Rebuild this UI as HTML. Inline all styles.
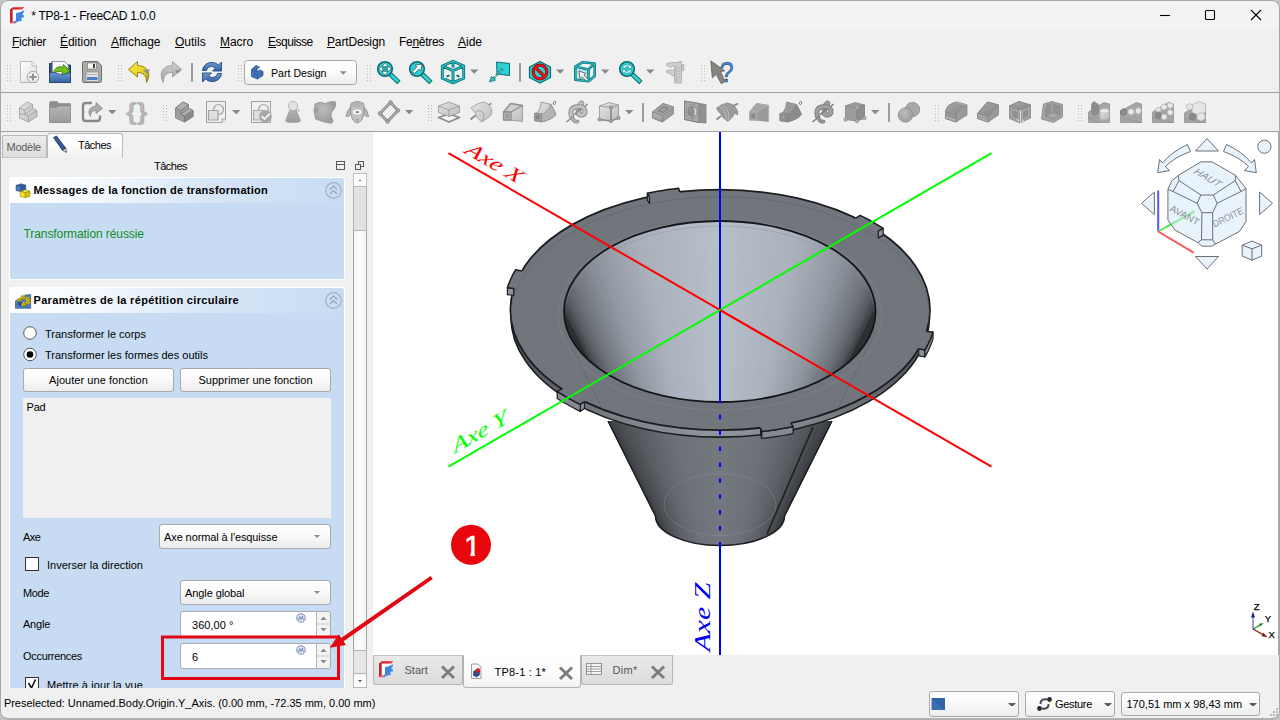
<!DOCTYPE html>
<html lang="fr"><head><meta charset="utf-8"><title>TP8-1 - FreeCAD 1.0.0</title>
<style>
html,body{margin:0;padding:0}
body{width:1280px;height:720px;position:relative;overflow:hidden;background:#f0f0f0;font-family:"Liberation Sans",sans-serif;color:#000}
.abs{position:absolute}
#titlebar{left:0;top:0;width:1280px;height:30px;background:#f1f3f5}
#title{left:31.300px;top:8.500px;font-size:12px;line-height:14px;white-space:nowrap;letter-spacing:-0.31px}
.menu{top:34px;font-size:12px;line-height:16px;white-space:nowrap}
.menu u{text-decoration-thickness:1px;text-underline-offset:1px}
.hline{left:0;width:1280px;height:1px;background:#a0a0a0}
.grip{width:4px;height:16px;background-image:radial-gradient(circle,#b4b4b4 0.6px,transparent 0.8px);background-size:2px 2px}
.ico{width:24px;height:24px}
.tsep{width:2px;height:18px;background:#8c8c8c}
.dd{width:0;height:0;border-left:4px solid transparent;border-right:4px solid transparent;border-top:4px solid #7a7a7a}
.btn{box-sizing:border-box;border:1px solid #a9a9a9;border-radius:3px;background:linear-gradient(#ffffff,#fafafa 45%,#ececec)}
.spin{box-sizing:border-box;border:1px solid #a9a9a9;border-radius:3px;background:#fff}
.cdd{width:0;height:0;border-left:3.5px solid transparent;border-right:3.5px solid transparent;border-top:3.5px solid #8a8a8a}
.t11{font-size:11px;line-height:13px;white-space:nowrap}
</style></head>
<body>
<!-- TITLE BAR -->
<div id="titlebar" class="abs"></div>
<svg class="abs" style="left:8px;top:5px" width="18" height="20" viewBox="8 5 18 20">
<path d="M10 9.500 L12.800 7.200 V21 L10 23.200 Z" fill="#c4202b"/>
<path d="M12.800 7.200 H24.200 L21.500 9.800 H12.800 Z" fill="#d8262f"/>
<path d="M20 7.200 H24.200 L21.500 9.800 H19 Z" fill="#f04a4a"/>
<path d="M10 23.200 L12.800 21 H16 L14 23.200 Z" fill="#ff5252"/>
<path d="M12.800 9.800 H21.500 V12.800 H16.800 V14.300 H19.500 V17.300 H16.800 V21.200 H12.800 Z" fill="#ffffff"/>
<path d="M16 13 L19 12.600 L21.500 11.500 L24.200 10.300 L23.400 13 L22 14.200 L23.800 15.200 V17.600 H21.800 L21.200 19 L22 20.400 L20.400 21.600 L19.200 20.600 L18.400 22 L16.800 21.800 L15.800 23.200 H13.800 L15.200 21.400 L16 19.500 Z" fill="#3b86e2"/>
</svg>
<div id="title" class="abs">* TP8-1 - FreeCAD 1.0.0</div>
<svg class="abs" style="left:1150px;top:0" width="130" height="30" viewBox="0 0 130 30" fill="none" stroke="#000" stroke-width="1.1">
<path d="M10 15.5 H20"/><rect x="55.5" y="10.5" width="9" height="9" rx="1"/><path d="M101 10 L111 20 M111 10 L101 20"/>
</svg>
<!-- MENU BAR -->
<div class="abs menu" style="left:12px;letter-spacing:-0.29px">Fichier</div>
<div class="abs menu" style="left:60px;letter-spacing:-0.03px">Édition</div>
<div class="abs menu" style="left:111px;letter-spacing:-0.04px">Affichage</div>
<div class="abs menu" style="left:175px;letter-spacing:0.01px">Outils</div>
<div class="abs menu" style="left:220px;letter-spacing:-0.06px">Macro</div>
<div class="abs menu" style="left:268px;letter-spacing:-0.49px">Esquisse</div>
<div class="abs menu" style="left:327px;letter-spacing:-0.14px">PartDesign</div>
<div class="abs menu" style="left:399px;letter-spacing:-0.29px">Fenêtres</div>
<div class="abs menu" style="left:458px;letter-spacing:0.00px">Aide</div>
<div class="abs" style="left:12.0px;top:47px;width:7.0px;height:1px;background:#000"></div><div class="abs" style="left:60.0px;top:47px;width:8.0px;height:1px;background:#000"></div><div class="abs" style="left:111.0px;top:47px;width:8.0px;height:1px;background:#000"></div><div class="abs" style="left:175.0px;top:47px;width:9.4px;height:1px;background:#000"></div><div class="abs" style="left:220.0px;top:47px;width:9.9px;height:1px;background:#000"></div><div class="abs" style="left:268.0px;top:47px;width:7.5px;height:1px;background:#000"></div><div class="abs" style="left:327.0px;top:47px;width:7.9px;height:1px;background:#000"></div><div class="abs" style="left:412.4px;top:47px;width:6.4px;height:1px;background:#000"></div><div class="abs" style="left:458.0px;top:47px;width:8.0px;height:1px;background:#000"></div>
<div class="abs hline" style="top:92px"></div>
<div class="abs hline" style="top:131px"></div>
<!--TOOLBAR1-->
<svg class="abs" style="left:0;top:54px" width="1280" height="38" viewBox="0 54 1280 38">
<defs>
<linearGradient id="gPage" x1="0" y1="0" x2="1" y2="1"><stop offset="0" stop-color="#fff"/><stop offset="1" stop-color="#dcdcdc"/></linearGradient>
<linearGradient id="gBlue" x1="0" y1="0" x2="0" y2="1"><stop offset="0" stop-color="#6d9bd0"/><stop offset="1" stop-color="#3465a4"/></linearGradient>
<linearGradient id="gYel" x1="0" y1="0" x2="1" y2="1"><stop offset="0" stop-color="#fce94f"/><stop offset="0.7" stop-color="#e6cc1a"/><stop offset="1" stop-color="#8a7a08"/></linearGradient>
<linearGradient id="gGry" x1="0" y1="0" x2="0" y2="1"><stop offset="0" stop-color="#d0d0d0"/><stop offset="1" stop-color="#a2a2a2"/></linearGradient>
<linearGradient id="gCombo" x1="0" y1="0" x2="0" y2="1"><stop offset="0" stop-color="#ffffff"/><stop offset="0.5" stop-color="#fbfbfb"/><stop offset="1" stop-color="#ececec"/></linearGradient>
<g id="grip" fill="#bbbbbb"><rect x="0" y="0" width="1" height="1"/><rect x="3" y="0" width="1" height="1"/><rect x="0" y="3" width="1" height="1"/><rect x="3" y="3" width="1" height="1"/><rect x="0" y="6" width="1" height="1"/><rect x="3" y="6" width="1" height="1"/><rect x="0" y="9" width="1" height="1"/><rect x="3" y="9" width="1" height="1"/><rect x="0" y="12" width="1" height="1"/><rect x="3" y="12" width="1" height="1"/><rect x="0" y="15" width="1" height="1"/><rect x="3" y="15" width="1" height="1"/></g>
<path id="dd" d="M0 0 H8.400 L4.200 4.300 Z" fill="#878787"/>
</defs>
<use href="#grip" x="7" y="65"/><use href="#grip" x="118" y="65"/><use href="#grip" x="238" y="65"/><use href="#grip" x="367" y="65"/><use href="#grip" x="701" y="65"/>
<!-- new -->
<path d="M20.5 61.5 H32 L36.5 66 V82.5 H20.5 Z" fill="url(#gPage)" stroke="#b8b8b8" stroke-width="1"/>
<path d="M32 61.5 V66 H36.5" fill="#f4f4f4" stroke="#b0b0b0" stroke-width="0.8"/>
<circle cx="33" cy="77" r="5.6" fill="#f2f2f2" stroke="#a8a8a8" stroke-width="1"/>
<path d="M33 73.5 V80.5 M29.5 77 H36.5" stroke="#8e8e8e" stroke-width="2"/>
<!-- open -->
<path d="M49.5 63.5 H52 V61.5 H64.5 L68 65 H70.5 V82.5 H49.5 Z" fill="#2a5590" stroke="#1b3a66" stroke-width="1"/>
<path d="M52.5 61.5 H64.5 L68 65 V76 H52.5 Z" fill="#fafafa" stroke="#9a9a9a" stroke-width="0.8"/>
<path d="M53.5 74 C54 67 60 65.5 63 67.5 L63.5 64.5 L70 71 L62 75.5 L62.5 72 C59.5 70.5 56 71.5 53.5 74 Z" fill="#73c21c" stroke="#3f7d0a" stroke-width="0.9"/>
<path d="M49.5 73 C55 71 58 74.5 62 74.5 C66 74.5 68 73 70.5 72.5 V82.5 H49.5 Z" fill="url(#gBlue)" stroke="#24466f" stroke-width="0.8"/>
<!-- save -->
<path d="M83.5 61.5 H97.5 L101.5 65.5 V80.5 Q101.5 82.5 99.5 82.5 H83.5 Q82.5 82.5 82.5 80.5 V63 Q82.5 61.5 83.5 61.5 Z" fill="#a9aba4" stroke="#6e706b" stroke-width="1"/>
<rect x="87.5" y="63" width="9" height="6" fill="#f6f6f6" stroke="#7a7a7a" stroke-width="0.7"/>
<rect x="93" y="64" width="2" height="4" fill="#3a3a3a"/>
<rect x="86" y="72" width="12.5" height="9.5" fill="#e2e2e2" stroke="#8a8a8a" stroke-width="0.7"/>
<path d="M87 74.5 H97.5" stroke="#b5b5b5" stroke-width="1"/>
<rect x="87" y="77" width="10.5" height="3" fill="#4a7fc4"/>
<!-- undo -->
<path d="M137.5 61.5 L128.5 69.5 L137.5 77 V72.5 C143 72.5 147 75 146.5 82.5 C150.5 76 150 66 137.5 65.5 Z" fill="url(#gYel)" stroke="#8a7808" stroke-width="0.9" stroke-linejoin="round"/>
<path d="M143 70 L150 69.5 L147 74 Z" fill="#8d8d8d"/>
<!-- redo -->
<path d="M172.500 61.5 L181.500 69.5 L172.500 77 V72.5 C167 72.500 163 75 163.500 82.500 C159.500 76 160 66 172.500 65.500 Z" fill="url(#gGry)" stroke="#9c9c9c" stroke-width="0.9" stroke-linejoin="round"/>
<path d="M175 70.5 L181.500 69.5 L177.500 73.500 Z" fill="#8f8f8f"/>
<rect x="191" y="63" width="2" height="19" fill="#9d9d9d"/>
<!-- refresh -->
<path d="M202.500 70.500 C203 63.500 212 59.500 218.500 65 L221.500 62 V71 H212.500 L215.500 68 C211.500 65 207.500 67 206.500 70.500 Z" fill="url(#gBlue)" stroke="#234a80" stroke-width="0.9" stroke-linejoin="round"/>
<path d="M221.500 73.500 C221 80.500 212 84.500 205.500 79 L202.500 82 V73 H211.500 L208.500 76 C212.500 79 216.500 77 217.500 73.500 Z" fill="url(#gBlue)" stroke="#234a80" stroke-width="0.9" stroke-linejoin="round"/>
<!-- combo -->
<rect x="244.500" y="60.500" width="112" height="24" rx="3" fill="url(#gCombo)" stroke="#a6a6a6"/>
<path d="M251.500 69.500 L256 65.500 L259.500 67 L257 69.500 V71.500 L260 70 L263 71.500 V75.500 L257.500 79 L251.500 76.500 Z" fill="#4174b8" stroke="#27508a" stroke-width="0.8" stroke-linejoin="round"/>
<path d="M251.500 69.500 L254.500 71 L254.500 74 L257.500 75.500 V79 M254.500 71 L257 69.500 M257.500 75.500 L263 71.500" stroke="#2a528c" stroke-width="0.7" fill="none"/>
<text x="271" y="76.500" font-family="Liberation Sans, sans-serif" font-size="11" fill="#000" textLength="55.500" lengthAdjust="spacingAndGlyphs">Part Design</text>
<path d="M339.800 71.200 H346.600 L343.200 74.800 Z" fill="#8e8e8e"/>
<!-- zoom fit -->
<g stroke-linejoin="round">
<path d="M390.0 74 L398.9 82.400" stroke="#0c6d72" stroke-width="4.800"/>
<path d="M390.0 74 L398.2 81.700" stroke="#2fd2d6" stroke-width="2.800"/>
<circle cx="385" cy="69" r="7.300" fill="#2ccfd4" stroke="#0c6d72" stroke-width="1.600"/>
<path d="M385 62.800 L388 66.600 H382 Z M385 75.200 L388 71.400 H382 Z M378.800 69 L382.600 66 V72 Z M391.200 69 L387.400 66 V72 Z" fill="#f4f4f4" stroke="#3a5a5c" stroke-width="0.600"/>
<rect x="383" y="67" width="4" height="4" fill="#1aa6ac"/>
</g>
<!-- zoom selection -->
<g stroke-linejoin="round">
<path d="M422.0 74 L430.9 82.400" stroke="#0c6d72" stroke-width="4.800"/>
<path d="M422.0 74 L430.2 81.700" stroke="#2fd2d6" stroke-width="2.800"/>
<circle cx="417" cy="69" r="7.300" fill="#2ccfd4" stroke="#0c6d72" stroke-width="1.600"/>
<path d="M422 64 L420.800 71 L419 69.200 L414.600 73.600 L412.400 71.400 L416.800 67 L415 65.200 Z" fill="#f4f4f4" stroke="#2c4a4c" stroke-width="0.700"/>
</g>
<!-- iso cube -->
<g fill="none" stroke-linejoin="round">
<path d="M453 61.200 L463.700 66 V78.200 L453 82.800 L442.300 78.200 V66 Z M442.300 66 L453 70.700 L463.700 66 M453 70.700 V82.800 M453 61.200 V67.500" stroke="#0b6b70" stroke-width="2.900"/>
<path d="M453 61.200 L463.700 66 V78.200 L453 82.800 L442.300 78.200 V66 Z M442.300 66 L453 70.700 L463.700 66 M453 70.700 V82.800 M453 62 V67" stroke="#25c2c7" stroke-width="1.300"/>
<ellipse cx="448" cy="76" rx="1.800" ry="1" fill="#0b6b70" transform="rotate(-20 448 76)"/><ellipse cx="458" cy="76" rx="1.800" ry="1" fill="#0b6b70" transform="rotate(20 458 76)"/>
</g>
<use href="#dd" x="470" y="69.500"/>
<!-- draw style -->
<path d="M496.500 62 L509.500 63.500 V75.500 L497 74 Z" fill="#2ccfd4" stroke="#0c6d72" stroke-width="1"/>
<path d="M489.500 82 L491.500 76.500 L495.500 80 Z" fill="#2ccfd4" stroke="#0c6d72" stroke-width="0.800"/>
<path d="M493.500 78.500 L503 68" stroke="#0c6d72" stroke-width="2.200" stroke-dasharray="2.500 1.200"/>
<path d="M493.500 78.500 L503 68" stroke="#cfeff0" stroke-width="0.700" stroke-dasharray="2.500 1.200"/>
<rect x="519" y="63" width="2" height="19" fill="#9d9d9d"/>
<!-- no-entry hex -->
<path d="M540 61.500 L550.500 67 V77.500 L540 83 L529.500 77.500 V67 Z" fill="#2ccfd4" stroke="#0c6d72" stroke-width="1.200" stroke-linejoin="round"/>
<path d="M540 63.500 L548.500 68 L540 72 L531.500 68 Z" fill="#43dade" opacity="0.600"/>
<circle cx="540" cy="72" r="6.800" fill="none" stroke="#7a0a0a" stroke-width="3.200"/>
<path d="M535.200 67.200 L544.800 76.800" stroke="#7a0a0a" stroke-width="3.200"/>
<circle cx="540" cy="72" r="6.800" fill="none" stroke="#e01818" stroke-width="2"/>
<path d="M535.200 67.200 L544.800 76.800" stroke="#e01818" stroke-width="2"/>
<use href="#dd" x="556" y="69.500"/>
<!-- bbox cube -->
<g stroke-linejoin="round">
<path d="M575.300 66.600 L582.400 62.300 L594.700 63.500 V76 L588.500 81.300 L575.300 79.700 Z" fill="#f6f6f6"/>
<path d="M575.300 66.600 L588.500 69.400 V81.300 L575.300 79.700 Z" fill="#b4eaec"/>
<path d="M575.300 66.600 L582.400 62.300 L594.700 63.500 V76 L588.500 81.300 L575.300 79.700 Z M575.300 66.600 L588.500 69.400 L594.700 63.500 M588.500 69.400 V81.300" fill="none" stroke="#0c6d72" stroke-width="2.600"/>
<path d="M575.300 66.600 L582.400 62.300 L594.700 63.500 V76 L588.500 81.300 L575.300 79.700 Z M575.300 66.600 L588.500 69.400 L594.700 63.500 M588.500 69.400 V81.300" fill="none" stroke="#27bcc1" stroke-width="1.200"/>
<path d="M578.800 71 L580.200 78.600 L582.200 76.800 L586.400 81.200 L588.200 79.600 L584 75.200 L586 73.400 Z" fill="#f4f4f4" stroke="#333" stroke-width="0.700"/>
</g>
<use href="#dd" x="601" y="69.500"/>
<!-- sync zoom -->
<g stroke-linejoin="round">
<path d="M632.0 74 L640.9 82.400" stroke="#0c6d72" stroke-width="4.800"/>
<path d="M632.0 74 L640.2 81.700" stroke="#2fd2d6" stroke-width="2.800"/>
<circle cx="627" cy="69" r="7.300" fill="#2ccfd4" stroke="#0c6d72" stroke-width="1.600"/>
<path d="M622.500 68 C623.500 64.500 628 64 630 66 L631.500 64.500 V68.500 H627.500 L629 67 C627.500 66 625.500 66.500 625 68 Z M631.500 70 C630.500 73.500 626 74 624 72 L622.500 73.500 V69.500 H626.500 L625 71 C626.500 72 628.500 71.500 629 70 Z" fill="#e8f6f6" stroke="#16868b" stroke-width="0.500"/>
</g>
<use href="#dd" x="646" y="69.500"/>
<!-- caliper -->
<g fill="#cfcfcf" stroke="#a4a4a4" stroke-width="0.700" stroke-linejoin="round">
<path d="M666.500 63.500 L672 62.500 H679 V61.500 H681.500 V83 H674.500 V66 H672.500 L671 67.500 L666.500 65.500 Z"/>
<path d="M666.500 70.500 L672 70 H674.500 V76 H672.500 L671 74 L666.500 72.500 Z"/>
<path d="M681.500 65 L684 64.500 V66.500 L681.500 67.500 Z M681.500 68.500 L684 68 V70 L681.500 71 Z"/>
<path d="M676 66 V82 M677.500 68 H680 M677.500 71 H680 M677.500 74 H680 M677.500 77 H680 M677.500 80 H680" fill="none" stroke="#a0a0a0" stroke-width="0.600"/>
</g>
<!-- whats this -->
<path d="M710.800 60.900 L712.300 77.800 L716.200 74.300 L721.300 83.700 L725.100 81.500 L720.600 71.700 L724.800 70.800 Z" fill="#84877f" stroke="#5c5e58" stroke-width="0.800" stroke-linejoin="round"/>
<text x="719.800" y="82" font-family="Liberation Sans, sans-serif" font-size="30" fill="#4d88cc" stroke="#1f4a85" stroke-width="0.600" textLength="13.800" lengthAdjust="spacingAndGlyphs">?</text>
</svg>
<!--/TOOLBAR1-->
<!--TOOLBAR2-->
<svg class="abs" style="left:0;top:93px" width="1280" height="38" viewBox="0 93 1280 38">
<defs>
<linearGradient id="gL" x1="0" y1="0" x2="1" y2="1"><stop offset="0" stop-color="#e4e4e4"/><stop offset="1" stop-color="#bdbdbd"/></linearGradient>
<linearGradient id="gM" x1="0" y1="0" x2="0" y2="1"><stop offset="0" stop-color="#b6b6b6"/><stop offset="1" stop-color="#9a9a9a"/></linearGradient>
<linearGradient id="gD" x1="0" y1="0" x2="1" y2="1"><stop offset="0" stop-color="#a6a6a6"/><stop offset="1" stop-color="#868686"/></linearGradient>
<radialGradient id="gS" cx="0.4" cy="0.35" r="0.7"><stop offset="0" stop-color="#bcbcbc"/><stop offset="1" stop-color="#9a9a9a"/></radialGradient>
</defs>
<use href="#grip" x="7" y="105"/><use href="#grip" x="163" y="105"/><use href="#grip" x="428" y="105"/><use href="#grip" x="935" y="105"/><use href="#grip" x="1078" y="105"/>
<!-- body (light) -->
<g stroke="#9a9a9a" stroke-width="0.8" stroke-linejoin="round">
<path d="M19.500 108 L27 102 L32.500 104.500 V108.500 L37 110.500 V116.500 L28.500 122 L19.500 118 Z" fill="url(#gL)"/>
<path d="M19.500 108 L25 110.500 L32.500 104.500 M25 110.500 V114.500 L28.500 116 L37 110.500 M28.500 116 V122 M19.500 113.500 L25 114.500 M25 114.500 L32.500 108.500" fill="none"/>
</g>
<!-- folder -->
<path d="M49.500 103 Q49.500 101.500 51 101.500 H57 L59 103.500 H70 Q70.500 103.500 70.500 104.500 V122.500 H49.500 Z" fill="#8e8e8e" stroke="#858585" stroke-width="0.600"/>
<path d="M49.500 107.500 H56.500 L58.500 106 H70.500 V122.500 H49.500 Z" fill="url(#gM)" stroke="#8c8c8c" stroke-width="0.600"/>
<!-- export -->
<path d="M92 103 H86 Q83 103 83 106 V118 Q83 121 86 121 H97 Q100 121 100 118 V115.500" fill="none" stroke="#8a8a8a" stroke-width="2.400"/>
<path d="M96 102.500 L102.500 108.500 L96 113.500 V110.500 C92 110.500 90.500 113 90.500 116.500 C87 111.500 89.500 106.500 96 106 Z" fill="#ababab" stroke="#8a8a8a" stroke-width="0.800" stroke-linejoin="round"/>
<use href="#dd" x="108" y="110"/>
<!-- braces -->
<text x="126" y="119.500" font-family="Liberation Sans, sans-serif" font-size="23" font-weight="bold" fill="#8e8e8e" textLength="21.500" lengthAdjust="spacingAndGlyphs">{}</text><text x="126" y="119.500" font-family="Liberation Sans, sans-serif" font-size="23" fill="#dedede" textLength="21.500" lengthAdjust="spacingAndGlyphs" opacity="0.55">{}</text>
<!-- body (dark) -->
<g stroke="#7c7c7c" stroke-width="0.800" stroke-linejoin="round">
<path d="M175.500 108 L183 102 L188.500 104.500 V108.500 L193 110.500 V116.500 L184.500 122 L175.500 118 Z" fill="#9c9c9c"/>
<path d="M183 102 L188.500 104.500 L181 110.500 L175.500 108 Z M188.500 108.500 L193 110.500 L184.500 116 L181 114.500 Z" fill="#b0b0b0"/>
<path d="M181 110.500 V114.500 L184.500 116 V122" fill="none"/>
<path d="M184.500 116 L193 110.500 V116.500 L184.500 122 Z" fill="#8a8a8a"/>
</g>
<!-- sketch -->
<g stroke-linejoin="round">
<path d="M206.500 101.500 H225.500 V119 L222 122.500 H206.500 Z" fill="#f0f0f0" stroke="#a0a0a0" stroke-width="1"/>
<path d="M222 122.500 V119 H225.500" fill="#dcdcdc" stroke="#a0a0a0" stroke-width="0.800"/>
<circle cx="218.500" cy="109.500" r="5" fill="#ececec" stroke="#a2a2a2" stroke-width="1.200"/>
<rect x="208.500" y="110.500" width="9.500" height="9.500" fill="#dedede" stroke="#a2a2a2" stroke-width="1.200"/>
</g>
<use href="#dd" x="232" y="110"/>
<!-- sketch check -->
<g stroke-linejoin="round">
<path d="M251.500 101.500 H270.500 V122.500 H251.500 Z" fill="#f0f0f0" stroke="#a0a0a0" stroke-width="1"/>
<circle cx="263.500" cy="109.500" r="5" fill="#ececec" stroke="#a8a8a8" stroke-width="1.200"/>
<rect x="253.500" y="110.500" width="9.500" height="9.500" fill="#dedede" stroke="#a8a8a8" stroke-width="1.200"/>
<circle cx="265.500" cy="116.500" r="6" fill="#a8a8a8" stroke="#9a9a9a" stroke-width="0.600"/>
<path d="M261.500 116 L264.500 119 L270 113.500" fill="none" stroke="#ededed" stroke-width="1.800"/>
</g>
<!-- cone figure -->
<path d="M290.500 108.500 L285.500 120.500 Q285.500 122.500 293 122.500 Q300.500 122.500 300.500 120.500 L295.500 108.500 Z" fill="url(#gM)" stroke="#939393" stroke-width="0.600"/>
<circle cx="293" cy="106" r="4.600" fill="#e2e2e2" stroke="#b2b2b2" stroke-width="0.900"/>
<path d="M296.500 108.500 L299.500 111.500" stroke="#c6c6c6" stroke-width="2"/>
<!-- blob -->
<path d="M315 104 Q320 101 325 103.500 Q330 101.500 334 101.500 L335.500 104 Q336 108 331.500 112 Q330 116 333 121 L330 123 Q322 122 315.500 119 Q313.500 112 315 104 Z" fill="url(#gS)" stroke="#929292" stroke-width="0.800"/>
<rect x="332" y="101.500" width="3.600" height="3.600" rx="1" fill="#a6a6a6" stroke="#8a8a8a" stroke-width="0.600"/>
<rect x="314" y="108.500" width="3.600" height="3.600" rx="1" fill="#a6a6a6" stroke="#8a8a8a" stroke-width="0.600"/>
<rect x="329" y="119.500" width="3.600" height="3.600" rx="1" fill="#a6a6a6" stroke="#8a8a8a" stroke-width="0.600"/>
<!-- sheep -->
<path d="M351 106.500 Q347 110 346 116.500 Q348.800 117.500 351.800 113 Z M363.600 106.500 Q367.600 110 368.600 116.500 Q365.800 117.500 362.800 113 Z" fill="#b6b6b6" stroke="#8c8c8c" stroke-width="0.800" stroke-linejoin="round"/>
<path d="M350.500 106 Q350 102.500 353.500 102.500 Q355 101 357.300 101.500 Q359.600 101 361.100 102.500 Q364.600 102.500 364.100 106 Q365 114 362 119.500 Q359.600 123 357.300 123 Q355 123 352.600 119.500 Q349.600 114 350.500 106 Z" fill="#c2c2c2" stroke="#888888" stroke-width="0.800" stroke-linejoin="round"/>
<path d="M350.500 106 Q350 102.500 353.500 102.500 Q355 101 357.300 101.500 Q359.600 101 361.100 102.500 Q364.600 102.500 364.100 106 Q357.300 109.500 350.500 106 Z" fill="#b2b2b2" opacity="0.900"/>
<ellipse cx="357.300" cy="112" rx="4.300" ry="2.500" fill="#f8f8f8"/>
<rect x="355.400" y="111.200" width="3.800" height="1.700" rx="0.800" fill="#7a7a7a"/>
<path d="M355.500 119.300 Q357.300 120.300 359 119.300 M357.300 119.800 V121.500" fill="none" stroke="#8a8a8a" stroke-width="0.600"/>
<!-- diamond -->
<path d="M390.500 102.500 L398 110.500 L387.500 121.500 L380 113.500 Z" fill="none" stroke="#8a8a8a" stroke-width="2.800" stroke-linejoin="round"/>
<path d="M390.500 102.500 L398 110.500 L387.500 121.500 L380 113.500 Z" fill="none" stroke="#d4d4d4" stroke-width="0.800" stroke-linejoin="round"/>
<g fill="#a4a4a4" stroke="#888" stroke-width="0.600"><circle cx="390.500" cy="102.500" r="1.900"/><circle cx="398" cy="110.500" r="1.900"/><circle cx="387.500" cy="121.500" r="1.900"/><circle cx="380" cy="113.500" r="1.900"/></g>
<use href="#dd" x="405" y="110"/>
<!-- pad -->
<g stroke-linejoin="round" stroke="#929292" stroke-width="0.800">
<path d="M438.500 117.500 L449 114 L459.500 117.500 L449 122 Z" fill="#f4f4f4" stroke="#8a8a8a" stroke-width="1.800"/>
<path d="M438.500 106 L449 102 L459.500 106 V112.500 L449 116.500 L438.500 112.500 Z" fill="url(#gL)"/>
<path d="M438.500 106 L449 110 L459.500 106 M449 110 V116.500" fill="none"/>
</g>
<!-- revolve -->
<g stroke-linejoin="round">
<path d="M470.500 119.500 L476 115 M487 105.500 L491.500 103.500" stroke="#8a8a8a" stroke-width="1.800"/>
<path d="M471 107.500 Q478 103 483.500 102 Q489 103 491.500 109 Q492.500 114 490.500 116 L482 122 Q475 117 475.500 112.500 Q473 111.500 471 107.500 Z" fill="url(#gL)" stroke="#999" stroke-width="0.800"/>
<path d="M475.500 112.500 Q478 109 482.500 112 Q485.500 116 482 122" fill="none" stroke="#999" stroke-width="0.800"/>
</g>
<!-- loft -->
<g stroke-linejoin="round" stroke="#909090" stroke-width="0.800">
<path d="M503.500 112 L510.500 103.500 L522.500 105.500 V121.500 L510 120 H503.500 Z" fill="url(#gL)"/>
<path d="M510.500 103.500 L522.500 105.500 L511 112 H503.500 Z" fill="#cfcfcf" stroke-width="1.300"/>
<rect x="503.500" y="112" width="7.500" height="8" fill="#b0b0b0" stroke-width="1.300"/>
<rect x="505.500" y="114" width="3.500" height="4" fill="#9a9a9a" stroke="none"/>
</g>
<!-- pipe -->
<g stroke-linejoin="round" stroke="#8c8c8c" stroke-width="0.800">
<path d="M541 102 L551 104.500 Q554 110 556 114.500 Q552 119.500 541.500 122 L534.500 120.500 V113.500 L537.500 112.500 Q541 108 541 102 Z" fill="url(#gL)"/>
<path d="M551 104.500 Q554 110 556 114.500 Q552 119.500 541.500 122 V114.500 Q548 112 551 104.500 Z" fill="#b4b4b4"/>
<rect x="534.500" y="113.500" width="7" height="7.500" fill="#a0a0a0"/>
<rect x="536" y="115.500" width="3.200" height="3.200" fill="#8a8a8a" stroke="#777" stroke-width="0.500"/>
<ellipse cx="554.500" cy="103" rx="1.100" ry="1.700" fill="none" stroke="#7a7a7a" stroke-width="0.900" transform="rotate(15 554.500 103)"/>
</g>
<!-- helix -->
<g stroke-linejoin="round" fill="none">
<path d="M566.500 122 L572 117.500 M583 108 L587.500 104" stroke="#8a8a8a" stroke-width="1.600"/>
<ellipse cx="580.500" cy="104.500" rx="2.600" ry="4" transform="rotate(40 580.500 104.500)" fill="#c0c0c0" stroke="#8a8a8a" stroke-width="0.900"/>
<path d="M571.500 116.500 Q569 109 575.500 107 Q583 105.500 585 110.500 Q585.500 115.500 580 115 Q577.500 114 578.500 111.500" stroke="#878787" stroke-width="5" stroke-linecap="round"/>
<path d="M571.500 116.500 Q569 109 575.500 107 Q583 105.500 585 110.500 Q585.500 115.500 580 115 Q577.500 114 578.500 111.500" stroke="#c2c2c2" stroke-width="3.200" stroke-linecap="round"/>
<path d="M572.500 118 Q574 122.500 577.500 121.500" stroke="#878787" stroke-width="3.600" stroke-linecap="round"/>
<path d="M572.500 118 Q574 122.500 577.500 121.500" stroke="#b4b4b4" stroke-width="2" stroke-linecap="round"/>
<path d="M573.500 115 L581.500 108.500" stroke="#8a8a8a" stroke-width="1.600"/>
</g>
<!-- additive cube -->
<g stroke-linejoin="round" stroke="#909090" stroke-width="0.800">
<path d="M599.500 106 L609 102.500 L618.500 105 V118 L611 121 L599.500 119.500 Z" fill="url(#gL)"/>
<path d="M599.500 106 L611 107.500 L618.500 105 M611 107.500 V121" fill="none"/>
<path d="M611 107.500 V121 M599.500 119.500 L611 121 L618.500 118" fill="none" stroke="#8a8a8a" stroke-width="1.400"/>
<g fill="#a2a2a2" stroke="#888" stroke-width="0.600"><circle cx="611" cy="107.500" r="1.800"/><circle cx="599.500" cy="119.500" r="1.800"/><circle cx="611" cy="121" r="1.800"/><circle cx="618.500" cy="118" r="1.800"/></g>
</g>
<use href="#dd" x="625" y="110"/>
<rect x="642" y="103" width="2" height="19" fill="#9d9d9d"/>
<!-- pocket -->
<g stroke-linejoin="round" stroke="#858585" stroke-width="0.800">
<path d="M652.500 112 L663 103.500 L673.500 107 V114 L662.500 122 L652.500 118 Z" fill="#9c9c9c"/>
<path d="M652.500 112 L663 103.500 L673.500 107 L662.500 115.500 Z" fill="#a8a8a8"/>
<path d="M652.500 112 L662.500 115.500 V122 L652.500 118 Z" fill="url(#gM)"/>
<path d="M657.500 111 L663.500 106 L669 108 L663 113 Z" fill="#8a8a8a"/>
<path d="M660 110.200 L663.800 107.200 L666.500 108.400 L663 111.400 Z" fill="#a2a2a2" stroke="none"/>
</g>
<!-- hole -->
<g stroke-linejoin="round" stroke="#7c7c7c" stroke-width="0.800">
<path d="M684.500 101 L699 103.500 L706 104.500 V123 L699 122.500 L684.500 119.500 Z" fill="#929292"/>
<path d="M684.500 101 L699 103.500 V122.500 L684.500 119.500 Z" fill="#a8a8a8"/>
<ellipse cx="691.800" cy="111.500" rx="5.600" ry="7.400" fill="#b8b8b8" stroke="#858585"/>
<ellipse cx="691.800" cy="111.500" rx="4" ry="5.800" fill="#8e8e8e" stroke="#7a7a7a" stroke-width="0.600"/>
<path d="M694.200 108 Q696 111.500 694.600 115 Q697.400 111.500 694.200 108 Z" fill="#f4f4f4" stroke="#f4f4f4" stroke-width="0.500"/>
</g>
<!-- groove -->
<g stroke-linejoin="round">
<path d="M716.500 119.500 L721 116 M733 106 L738 103.500" stroke="#858585" stroke-width="1.600"/>
<path d="M716.500 108 Q722 104 727 103 Q733 103.500 736 108 Q738.500 112 737.500 115 L735 113 Q733 117 728 121.500 Q722 118 721 114 Q718 112 716.500 108 Z" fill="#9a9a9a" stroke="#858585" stroke-width="0.800"/>
<path d="M719.500 106.500 Q724 109 725.500 114 Q727 118 725 120 M722.500 105 Q727 108 728.500 113 Q729.500 117 728 120" fill="none" stroke="#bdbdbd" stroke-width="0.900"/>
</g>
<!-- sub loft -->
<g stroke-linejoin="round" stroke="#8a8a8a" stroke-width="0.800">
<path d="M749.500 112 L756.500 103.500 L768.500 105.500 V121.500 L756 120 H749.500 Z" fill="#9a9a9a"/>
<path d="M756.500 103.500 L768.500 105.500 L757 112 H749.500 Z" fill="#a6a6a6" stroke="#adadad" stroke-width="1"/>
<rect x="749.500" y="112" width="7.500" height="8" fill="#9e9e9e" stroke="#b0b0b0" stroke-width="1"/>
<rect x="751.500" y="114" width="3.500" height="4" fill="#8a8a8a" stroke="none"/>
<path d="M768.500 105.500 V121.500" stroke="#b4b4b4" stroke-width="1.200"/>
</g>
<!-- sub pipe -->
<g stroke-linejoin="round" stroke="#858585" stroke-width="0.800">
<path d="M786.500 102 L796.500 104.500 Q799.500 110 801.500 114.500 Q797.500 119.500 787 122 L780 120.500 V113.500 L783 112.500 Q786.500 108 786.500 102 Z" fill="#9a9a9a"/>
<path d="M796.500 104.500 Q799.500 110 801.500 114.500 Q797.500 119.500 787 122 V114.500 Q793.500 112 796.500 104.500 Z" fill="#8c8c8c"/>
<rect x="780" y="113.500" width="7" height="7.500" fill="#929292"/>
<rect x="781.500" y="116" width="3.200" height="2.200" fill="#b4b4b4" stroke="#7a7a7a" stroke-width="0.500"/>
<ellipse cx="800.500" cy="103" rx="1.100" ry="1.700" fill="none" stroke="#7a7a7a" stroke-width="0.900" transform="rotate(15 800.500 103)"/>
</g>
<!-- sub helix -->
<g stroke-linejoin="round" fill="none">
<path d="M812.5 122.0 L818.0 117.5 M829.0 108.0 L833.5 104.0" stroke="#7e7e7e" stroke-width="1.600"/>
<ellipse cx="826.5" cy="104.500" rx="2.600" ry="4" transform="rotate(40 826.5 104.500)" fill="#a0a0a0" stroke="#7e7e7e" stroke-width="0.900"/>
<path d="M817.5 116.5 Q815.0 109.0 821.5 107.0 Q829.0 105.5 831.0 110.5 Q831.5 115.5 826.0 115.0 Q823.5 114.0 824.5 111.5" stroke="#7c7c7c" stroke-width="5" stroke-linecap="round"/>
<path d="M817.5 116.5 Q815.0 109.0 821.5 107.0 Q829.0 105.5 831.0 110.5 Q831.5 115.5 826.0 115.0 Q823.5 114.0 824.5 111.5" stroke="#a0a0a0" stroke-width="3.200" stroke-linecap="round"/>
<path d="M818.5 118.0 Q820.0 122.5 823.5 121.5" stroke="#7c7c7c" stroke-width="3.600" stroke-linecap="round"/>
<path d="M818.5 118.0 Q820.0 122.5 823.5 121.5" stroke="#989898" stroke-width="2" stroke-linecap="round"/>
<path d="M819.5 115.0 L827.5 108.5" stroke="#7e7e7e" stroke-width="1.600"/>
</g>
<!-- sub cube -->
<g stroke-linejoin="round" stroke="#858585" stroke-width="0.800">
<path d="M845.500 106 L855 102.500 L864.500 105 V118 L857 121 L845.500 119.500 Z" fill="#9c9c9c"/>
<path d="M857 107.500 L864.500 105 V118 L857 121 Z" fill="#8e8e8e"/>
<path d="M845.500 106 L857 107.500 L864.500 105 M857 107.500 V121" fill="none"/>
<g fill="#b0b0b0" stroke="#8a8a8a" stroke-width="0.600"><circle cx="857" cy="107.500" r="1.800"/><circle cx="845.500" cy="119.500" r="1.800"/><circle cx="857" cy="121" r="1.800"/><circle cx="864.500" cy="118" r="1.800"/></g>
</g>
<use href="#dd" x="871" y="110"/>
<rect x="888" y="103" width="2" height="19" fill="#9d9d9d"/>
<!-- boolean -->
<circle cx="912.500" cy="109.500" r="7.200" fill="#a8a8a8" stroke="#8e8e8e" stroke-width="0.800"/>
<circle cx="905.500" cy="115" r="7.200" fill="url(#gS)" stroke="#8a8a8a" stroke-width="0.800"/>
<!-- fillet -->
<g stroke-linejoin="round" stroke="#858585" stroke-width="0.800">
<path d="M945.500 112 Q946.500 104 957 102 L967 105 V115 L956 122 L945.500 118.500 Z" fill="#9a9a9a"/>
<path d="M945.500 112 Q946.500 104 957 102 L967 105 Q957.500 107 956 115.500 Z" fill="url(#gD)"/>
<path d="M945.500 115 L956 118.500 M956 115.500 V122" fill="none"/>
<path d="M945.500 115 L956 118.500 V122 L945.500 118.500 Z" fill="#b0b0b0"/>
<path d="M957 102 L967 105 L965.500 105.500 L955.500 102.500 Z" fill="#b8b8b8" stroke="none"/>
</g>
<!-- chamfer -->
<g stroke-linejoin="round" stroke="#858585" stroke-width="0.800">
<path d="M977.500 113.500 L987.500 102 L998.500 105 V115 L988 122 L977.500 118.500 Z" fill="#9a9a9a"/>
<path d="M977.500 113.500 L987.500 102 L998.500 105 L988 117 Z" fill="url(#gD)"/>
<path d="M977.500 113.500 L988 117 V122 L977.500 118.500 Z" fill="#b0b0b0"/>
<path d="M977.500 116 L988 119.500" fill="none"/>
</g>
<!-- draft -->
<g stroke-linejoin="round" stroke="#858585" stroke-width="0.800">
<path d="M1009.500 106 L1019 101.500 L1030.500 105 V118 L1020 123 L1009.500 118.500 Z" fill="#a0a0a0"/>
<path d="M1009.500 106 L1019 101.500 L1030.500 105 L1020.500 110 Z" fill="url(#gD)"/>
<path d="M1020.500 110 V123" fill="none" stroke="#d8d8d8" stroke-width="1"/>
<path d="M1012 109.500 L1018.500 112 V119.500 L1012 117 Z M1022.500 112 L1028.500 109 V116.500 L1022.500 119.500 Z" fill="#909090" stroke="#b4b4b4" stroke-width="0.600"/>
<path d="M1016.500 119.500 L1019 121 M1024 120.500 L1022 121.500" stroke="#f0f0f0" stroke-width="1"/>
</g>
<!-- thickness -->
<g stroke-linejoin="round" stroke="#858585" stroke-width="0.800">
<path d="M1043.500 104 L1052 101.500 L1062.500 104.500 V117 L1053.500 122.500 L1041.500 119 Z" fill="#a4a4a4"/>
<path d="M1046.500 105.500 L1052 104 L1060 106.500 V115 L1053.500 119 L1045.500 116.500 Z" fill="#929292"/>
<path d="M1052 104 V112.500 L1045.500 116.500 M1052 112.500 L1060 115" fill="none" stroke="#b4b4b4" stroke-width="0.800"/>
<path d="M1052 112.500 L1060 115 L1053.500 119 L1045.500 116.500 Z" fill="#a8a8a8"/>
</g>
<!-- mirrored -->
<g stroke-linejoin="round" stroke="#8a8a8a" stroke-width="0.700">
<path d="M1088.500 112 L1104 102.500 L1109.500 104 V122.500 H1088.500 Z" fill="#a6a6a6"/>
<path d="M1088.500 118 L1100 122.500 M1088.500 118 Q1098 116 1109.500 119" fill="none" stroke="#8c8c8c"/>
<path d="M1091.500 104 L1094 101.500 L1098.500 104.500 V113 L1094 116 L1091.500 113.500 Z" fill="#8c8c8c"/>
<path d="M1100 111 Q1100 108.500 1104.500 108.500 Q1109 108.500 1109 111 V117.500 Q1109 119.500 1104.500 119.500 Q1100 119.500 1100 117.500 Z" fill="url(#gL)" stroke="#b4b4b4"/>
<ellipse cx="1104.500" cy="111" rx="4.500" ry="2" fill="#ececec" stroke="#c0c0c0"/>
</g>
<!-- linear pattern -->
<g stroke-linejoin="round" stroke="#8a8a8a" stroke-width="0.700">
<path d="M1120.500 111 L1136.500 102.500 L1141.500 104 V122.500 H1120.500 Z" fill="#a6a6a6"/>
<path d="M1120.500 117.500 L1141.500 122.500" fill="none" stroke="#909090"/>
<path d="M1120.500 110.500 L1123.500 108.500 L1126.500 110 V114 L1123.500 115.500 L1120.500 114 Z" fill="#8a8a8a" stroke="#777"/>
<path d="M1128 110 L1131 108.500 L1134 110 V113.500 L1131 115 L1128 113.500 Z M1135.500 109 L1138.500 107.500 L1141 109 V112.500 L1138.500 114 L1135.500 112.500 Z" fill="#e8e8e8" stroke="#b4b4b4"/>
</g>
<!-- polar pattern -->
<g stroke-linejoin="round" stroke="#8a8a8a" stroke-width="0.700">
<path d="M1152.500 112 L1168.500 102.500 L1173.500 104 V122.500 H1152.500 Z" fill="#a6a6a6"/>
<path d="M1152.500 118 L1173.500 122.500" fill="none" stroke="#909090"/>
<path d="M1155.500 113.500 L1158.500 112 L1161 113.500 V117 L1158.500 118.500 L1155.500 117 Z" fill="#8a8a8a" stroke="#777"/>
<g fill="#e8e8e8" stroke="#b4b4b4"><path d="M1161 105.500 L1164 104 L1167 105.500 V108.500 L1164 110 L1161 108.500 Z"/><path d="M1167.500 103.500 L1170 102.500 L1173 104 V107 L1170 108.500 L1167.500 107 Z"/><path d="M1156 108.500 L1158.500 107.500 L1161 108.500 V111 L1158.500 112 L1156 111 Z"/><path d="M1167.500 110.500 L1170 109.500 L1173 111 V114 L1170 115.500 L1167.500 114 Z"/><path d="M1161.500 115 L1164 114 L1167 115.500 V118.500 L1164 120 L1161.500 118.500 Z"/></g>
</g>
<!-- multitransform -->
<g stroke-linejoin="round" stroke="#8a8a8a" stroke-width="0.700">
<path d="M1184.500 113 L1200 103.500 L1205.500 104 V122.500 H1184.500 Z" fill="#a6a6a6"/>
<path d="M1184.500 118.500 L1205.500 122.500" fill="none" stroke="#909090"/>
<g fill="#e6e6e6" stroke="#b4b4b4"><path d="M1192 105 L1199 101.500 L1205.500 104 V112 L1199 115.500 L1192 112 Z"/><path d="M1186.500 105 L1189.500 103.500 L1192.500 105 V108.500 L1189.500 110 L1186.500 108.500 Z"/><path d="M1197 114.500 L1201 112.500 L1205 114.500 V119 L1201 121 L1197 119 Z"/></g>
<path d="M1189.500 115 L1192.500 113.500 L1195.500 115 V118.500 L1192.500 120 L1189.500 118.500 Z" fill="#8a8a8a" stroke="#777"/>
</g>
</svg>
<!--/TOOLBAR2-->
<!--LEFTPANEL-->
<div class="abs" style="left:0;top:132px;width:372px;height:556px;overflow:hidden;background:#f0f0f0">
<div class="abs" style="left:0;top:0;width:372px;height:556px;font-size:11px">
<!-- tabs (coords relative: y-132) -->
<div class="abs" style="left:1.500px;top:3px;width:45px;height:22.500px;box-sizing:border-box;border:1px solid #b9b9b9;border-bottom-color:#c4c4c4;border-radius:2px 2px 0 0;background:linear-gradient(#ebebeb,#dedede)"></div>
<div class="abs t11 m" style="left:6.500px;top:9px;color:#5c5c5c;letter-spacing:-0.267px">Modèle</div>
<div class="abs" style="left:46.500px;top:0.500px;width:76.500px;height:25.500px;box-sizing:border-box;border:1px solid #b9b9b9;border-bottom:none;border-radius:3px 3px 0 0;background:linear-gradient(#fcfcfc,#ffffff 40%,#f4f4f4 80%,#f0f0f0)"></div>
<svg class="abs" style="left:50px;top:3px" width="20" height="20" viewBox="0 0 20 20"><path d="M3.500 2.500 L6.500 1 L16 13.500 L12.500 15.500 Z" fill="#35599a" stroke="#1d3560" stroke-width="0.800"/><path d="M12.500 15.500 L16 13.500 L16.500 17.500 Z" fill="#f2f2f2" stroke="#444" stroke-width="0.600"/><path d="M15.300 16.300 L16.500 17.500 L16.200 15.800 Z" fill="#222"/></svg>
<div class="abs t11 m" style="left:78px;top:7px;letter-spacing:-0.517px">Tâches</div>
<div class="abs t11 m" style="left:154px;top:28px;letter-spacing:-0.517px">Tâches</div>
<svg class="abs" style="left:334px;top:27px" width="34" height="14" viewBox="334 159 34 14" fill="none" stroke="#5a5a5a" stroke-width="1"><rect x="336.500" y="161.500" width="8" height="8"/><path d="M336.500 164.500 H344.500"/><rect x="358.500" y="161.500" width="5" height="5" fill="#f0f0f0"/><rect x="355.500" y="164.500" width="5" height="5" fill="#f0f0f0"/></svg>
<!-- box 1 -->
<div class="abs" style="left:9px;top:45px;width:336px;height:103px;background:#fff;border-radius:3px"></div>
<div class="abs" style="left:10px;top:46px;width:334px;height:25px;background:linear-gradient(90deg,#ffffff 0%,#f4f8fd 25%,#d6e5f6 60%,#c7dcf3 100%);border-radius:2px 2px 0 0"></div>
<div class="abs" style="left:10px;top:71px;width:334px;height:76px;background:#c7dcf3;border-radius:0 0 2px 2px"></div>
<svg class="abs" style="left:15px;top:51px" width="17" height="17" viewBox="0 0 17 17"><path d="M1.0 2.4 L6.0 0.8 L10.8 2.2 L6.0 3.6 Z" fill="#3c66a6" stroke="#1e3d6e" stroke-width="0.500" stroke-linejoin="round"/><path d="M1.0 2.4 L6.0 3.6 L6.0 8.8 L1.0 7.6 Z" fill="#4a7ec4" stroke="#1e3d6e" stroke-width="0.500" stroke-linejoin="round"/><path d="M6.0 3.6 L10.8 2.2 L10.8 7.4 L6.0 8.8 Z" fill="#2f5fa2" stroke="#1e3d6e" stroke-width="0.500" stroke-linejoin="round"/><path d="M5.2 8.4 L10.2 6.8 L15.0 8.2 L10.2 9.6 Z" fill="#f6e84a" stroke="#8a7a08" stroke-width="0.500" stroke-linejoin="round"/><path d="M5.2 8.4 L10.2 9.6 L10.2 14.8 L5.2 13.6 Z" fill="#f4de28" stroke="#8a7a08" stroke-width="0.500" stroke-linejoin="round"/><path d="M10.2 9.6 L15.0 8.2 L15.0 13.4 L10.2 14.8 Z" fill="#d8c010" stroke="#8a7a08" stroke-width="0.500" stroke-linejoin="round"/></svg>
<div class="abs t11 m" style="left:33.500px;top:52px;font-weight:bold;letter-spacing:0.263px">Messages de la fonction de transformation</div>
<svg class="abs" style="left:324px;top:49px" width="19" height="19" viewBox="0 0 19 19" fill="none"><circle cx="9.500" cy="9.500" r="7.800" stroke="#a6b1c0" stroke-width="1.200"/><path d="M6 8.500 L9.500 5 L13 8.500 M6 13 L9.500 9.500 L13 13" stroke="#98a3b3" stroke-width="1.200"/></svg>
<div class="abs t11 m" style="left:23.500px;top:96px;color:#148c1e;font-size:12px;letter-spacing:-0.082px">Transformation réussie</div>
<!-- box 2 -->
<div class="abs" style="left:9px;top:155px;width:336px;height:420px;background:#fff;border-radius:3px"></div>
<div class="abs" style="left:10px;top:156px;width:334px;height:25px;background:linear-gradient(90deg,#ffffff 0%,#f4f8fd 25%,#d6e5f6 60%,#c7dcf3 100%);border-radius:2px 2px 0 0"></div>
<div class="abs" style="left:10px;top:181px;width:334px;height:400px;background:#c7dcf3"></div>
<svg class="abs" style="left:15px;top:162px" width="17" height="16" viewBox="0 0 17 16"><path d="M0.300 7 L10.500 1 L15.700 0.500 V14.300 H0.300 Z" fill="#4f80c2" stroke="#2a4c80" stroke-width="0.600" stroke-linejoin="round"/><path d="M0.300 10.500 L15.700 14.300" stroke="#34609e" stroke-width="0.600"/><path d="M2.5 5.0 L4.7 4.0 L7.0 5.0 L4.7 6.0 Z" fill="#f8ea50" stroke="#7a6a06" stroke-width="0.400"/><path d="M2.5 5.0 L4.7 6.0 V8.5 L2.5 7.5 Z" fill="#f0d818" stroke="#7a6a06" stroke-width="0.400"/><path d="M4.7 6.0 L7.0 5.0 V7.5 L4.7 8.5 Z" fill="#c8ae0c" stroke="#7a6a06" stroke-width="0.400"/><path d="M6.0 2.0 L8.2 1.0 L10.5 2.0 L8.2 3.0 Z" fill="#f8ea50" stroke="#7a6a06" stroke-width="0.400"/><path d="M6.0 2.0 L8.2 3.0 V5.5 L6.0 4.5 Z" fill="#f0d818" stroke="#7a6a06" stroke-width="0.400"/><path d="M8.2 3.0 L10.5 2.0 V4.5 L8.2 5.5 Z" fill="#c8ae0c" stroke="#7a6a06" stroke-width="0.400"/><path d="M10.5 4.0 L12.7 3.0 L15.0 4.0 L12.7 5.0 Z" fill="#f8ea50" stroke="#7a6a06" stroke-width="0.400"/><path d="M10.5 4.0 L12.7 5.0 V7.5 L10.5 6.5 Z" fill="#f0d818" stroke="#7a6a06" stroke-width="0.400"/><path d="M12.7 5.0 L15.0 4.0 V6.5 L12.7 7.5 Z" fill="#c8ae0c" stroke="#7a6a06" stroke-width="0.400"/><path d="M11.0 7.0 L13.2 6.0 L15.5 7.0 L13.2 8.0 Z" fill="#f8ea50" stroke="#7a6a06" stroke-width="0.400"/><path d="M11.0 7.0 L13.2 8.0 V10.5 L11.0 9.5 Z" fill="#f0d818" stroke="#7a6a06" stroke-width="0.400"/><path d="M13.2 8.0 L15.5 7.0 V9.5 L13.2 10.5 Z" fill="#c8ae0c" stroke="#7a6a06" stroke-width="0.400"/><path d="M3.0 8.0 L5.2 7.0 L7.5 8.0 L5.2 9.0 Z" fill="#5a8ad0" stroke="#1e3a66" stroke-width="0.400"/><path d="M3.0 8.0 L5.2 9.0 V11.5 L3.0 10.5 Z" fill="#3c68aa" stroke="#1e3a66" stroke-width="0.400"/><path d="M5.2 9.0 L7.5 8.0 V10.5 L5.2 11.5 Z" fill="#2a4c84" stroke="#1e3a66" stroke-width="0.400"/><path d="M6.5 9.0 L8.7 8.0 L11.0 9.0 L8.7 10.0 Z" fill="#f8ea50" stroke="#7a6a06" stroke-width="0.400"/><path d="M6.5 9.0 L8.7 10.0 V12.5 L6.5 11.5 Z" fill="#f0d818" stroke="#7a6a06" stroke-width="0.400"/><path d="M8.7 10.0 L11.0 9.0 V11.5 L8.7 12.5 Z" fill="#c8ae0c" stroke="#7a6a06" stroke-width="0.400"/></svg>
<div class="abs t11 m" style="left:33.500px;top:162px;font-weight:bold;letter-spacing:0.324px">Paramètres de la répétition circulaire</div>
<svg class="abs" style="left:324px;top:159px" width="19" height="19" viewBox="0 0 19 19" fill="none"><circle cx="9.500" cy="9.500" r="7.800" stroke="#a6b1c0" stroke-width="1.200"/><path d="M6 8.500 L9.500 5 L13 8.500 M6 13 L9.500 9.500 L13 13" stroke="#98a3b3" stroke-width="1.200"/></svg>
<!-- radios -->
<svg class="abs" style="left:22px;top:193px" width="16" height="38" viewBox="22 325 16 38"><circle cx="30" cy="333" r="6.300" fill="#fff" stroke="#555" stroke-width="1"/><circle cx="30" cy="354.500" r="6.300" fill="#fff" stroke="#555" stroke-width="1"/><circle cx="30" cy="354.500" r="3.300" fill="#000"/></svg>
<div class="abs t11 m" style="left:45px;top:195.500px;letter-spacing:-0.005px">Transformer le corps</div>
<div class="abs t11 m" style="left:45px;top:216.500px;letter-spacing:0.006px">Transformer les formes des outils</div>
<!-- buttons -->
<div class="abs btn" style="left:23px;top:236px;width:151px;height:24px"></div>
<div class="abs btn" style="left:180px;top:236px;width:151px;height:24px"></div>
<div class="abs t11 m" style="left:49px;top:241.500px;letter-spacing:0.055px">Ajouter une fonction</div>
<div class="abs t11 m" style="left:198.500px;top:241.500px;letter-spacing:0.014px">Supprimer une fonction</div>
<!-- list -->
<div class="abs" style="left:23px;top:266px;width:308px;height:120px;background:#f0f0f0"></div>
<div class="abs t11 m" style="left:26.500px;top:268.500px;letter-spacing:-0.200px">Pad</div>
<!-- Axe -->
<div class="abs t11 m" style="left:23px;top:398.500px;letter-spacing:-0.500px">Axe</div>
<div class="abs btn" style="left:159px;top:392px;width:172px;height:25px"></div>
<div class="abs t11 m" style="left:164px;top:398.500px;letter-spacing:-0.100px">Axe normal à l'esquisse</div>
<div class="abs cdd" style="left:313.500px;top:402.500px"></div>
<div class="abs" style="left:25px;top:425px;width:14px;height:14px;box-sizing:border-box;border:1px solid #333;background:#fff"></div>
<div class="abs t11 m" style="left:47px;top:426.500px;letter-spacing:0.000px">Inverser la direction</div>
<div class="abs t11 m" style="left:23px;top:454.500px;letter-spacing:-0.375px">Mode</div>
<div class="abs btn" style="left:180px;top:448px;width:151px;height:25px"></div>
<div class="abs t11 m" style="left:185px;top:454.500px;letter-spacing:-0.092px">Angle global</div>
<div class="abs cdd" style="left:313.500px;top:458.500px"></div>
<div class="abs t11 m" style="left:23px;top:485.500px;letter-spacing:-0.220px">Angle</div>
<div class="abs spin" style="left:180px;top:479px;width:151px;height:26px"></div>
<div class="abs t11 m" style="left:192px;top:486.500px;letter-spacing:0.050px">360,00 °</div>
<div class="abs t11 m" style="left:23px;top:517.500px;letter-spacing:-0.309px">Occurrences</div>
<div class="abs spin" style="left:180px;top:511px;width:151px;height:26px"></div>
<div class="abs t11 m" style="left:192px;top:518.500px">6</div>
<svg class="abs" style="left:294px;top:479px" width="38" height="60" viewBox="294 611 38 60">
<g id="spb"><path d="M317 612 H328 Q330 612 330 614 V634 Q330 636 328 636 H317 Z" fill="#f3f3f3"/><path d="M316.500 612 V636" stroke="#b4b4b4" stroke-width="1"/><path d="M316.500 624 H330.500" stroke="#c8c8c8" stroke-width="1"/><path d="M320.500 620 L323.500 616.500 L326.500 620 Z M320.500 628 L323.500 631.500 L326.500 628 Z" fill="#8a8a8a"/><circle cx="301" cy="618" r="4.300" fill="#dfe6f2" stroke="#6a85b5" stroke-width="0.900"/><path d="M298.500 620 L299.800 616.500 L300.800 619.500 L302.500 616 L303.200 620" fill="none" stroke="#4a68a0" stroke-width="0.700"/></g>
<use href="#spb" y="32"/>
</svg>
<div class="abs" style="left:25px;top:545px;width:14px;height:14px;box-sizing:border-box;border:1px solid #333;background:#fff"></div>
<svg class="abs" style="left:25px;top:545px" width="14" height="14" viewBox="0 0 14 14"><path d="M3.500 6 L6.500 11 L10.500 2.500" fill="none" stroke="#111" stroke-width="1.600"/></svg>
<div class="abs t11 m" style="left:47px;top:546.500px;letter-spacing:0.090px">Mettre à jour la vue</div>
<!-- scrollbar -->
<div class="abs" style="left:353px;top:41px;width:14px;height:515px;box-sizing:border-box;border-left:1px solid #a2a2a2;border-right:1px solid #a8a8a8;background:linear-gradient(90deg,#f4f4f4,#fdfdfd 50%,#f4f4f4)"></div>
<div class="abs" style="left:353px;top:41px;width:14px;height:13px;box-sizing:border-box;border:1px solid #c0c0c0;border-bottom:none;background:#fcfcfc"></div>
<div class="abs" style="left:353px;top:54px;width:14px;height:45px;box-sizing:border-box;border:1px solid #b4b4b4;background:#e2e2e2"></div>
<div class="abs" style="left:353px;top:518px;width:14px;height:24px;box-sizing:border-box;border:1px solid #b4b4b4;background:#e6e6e6"></div>
<div class="abs" style="left:353px;top:542px;width:14px;height:14px;box-sizing:border-box;border:1px solid #b4b4b4;border-top:none;background:#fcfcfc"></div>
<svg class="abs" style="left:353px;top:41px" width="14" height="515" viewBox="0 0 14 515"><path d="M5.500 8 L7 6.500 L8.500 8 Z M5.500 547.500 L7 549 L8.500 547.500 Z" transform="translate(0,0)" fill="#666"/><path d="M5 507 H9 L7 509.500 Z" fill="#666"/></svg>
</div></div>
<div class="abs" style="left:0;top:132px;width:1px;height:556px;background:#a8a8a8"></div>
<!--/LEFTPANEL-->
<!--VIEW3D-->
<svg class="abs" style="left:373px;top:132px" width="907" height="523" viewBox="373 132 907 523">
<defs>
<linearGradient id="gRim" x1="510" y1="0" x2="930" y2="0" gradientUnits="userSpaceOnUse">
<stop offset="0" stop-color="#4a4d52"/><stop offset="0.250" stop-color="#7b8087"/><stop offset="0.500" stop-color="#9097a0"/><stop offset="0.750" stop-color="#7b8087"/><stop offset="1" stop-color="#4a4d52"/></linearGradient>
<clipPath id="cpIn"><ellipse cx="719.800" cy="311.500" rx="155.800" ry="90.500"/></clipPath>
<clipPath id="cpOut"><path d="M608 421 L655.500 516 A64.500 29.500 0 0 0 784.500 516 L832 421 Z"/></clipPath>
<clipPath id="cpTop"><ellipse cx="720.200" cy="309.900" rx="209.800" ry="120.200"/></clipPath>
</defs>
<rect x="373" y="132" width="907" height="523" fill="#fff"/>
<!-- cone body -->
<g clip-path="url(#cpOut)" shape-rendering="crispEdges">
<path d="M720.0 645.0 L589.4 420.2 L592.6 418.4 Z" fill="#2c2e32"/>
<path d="M720.0 645.0 L591.4 419.0 L594.5 417.3 Z" fill="#2c2e32"/>
<path d="M720.0 645.0 L593.4 417.9 L596.5 416.2 Z" fill="#2c2e32"/>
<path d="M720.0 645.0 L595.3 416.8 L598.5 415.1 Z" fill="#2c2e32"/>
<path d="M720.0 645.0 L597.3 415.8 L600.5 414.1 Z" fill="#2c2e32"/>
<path d="M720.0 645.0 L599.3 414.7 L602.6 413.0 Z" fill="#303237"/>
<path d="M720.0 645.0 L601.4 413.6 L604.6 412.0 Z" fill="#36393d"/>
<path d="M720.0 645.0 L603.4 412.6 L606.6 411.0 Z" fill="#3b3e43"/>
<path d="M720.0 645.0 L605.4 411.6 L608.7 410.0 Z" fill="#404247"/>
<path d="M720.0 645.0 L607.5 410.6 L610.7 409.1 Z" fill="#43464b"/>
<path d="M720.0 645.0 L609.5 409.6 L612.8 408.1 Z" fill="#46494e"/>
<path d="M720.0 645.0 L611.6 408.7 L614.9 407.2 Z" fill="#494c51"/>
<path d="M720.0 645.0 L613.6 407.8 L616.9 406.3 Z" fill="#4b4f54"/>
<path d="M720.0 645.0 L615.7 406.8 L619.0 405.4 Z" fill="#4d5156"/>
<path d="M720.0 645.0 L617.8 405.9 L621.1 404.5 Z" fill="#4f5358"/>
<path d="M720.0 645.0 L619.9 405.1 L623.2 403.7 Z" fill="#51555a"/>
<path d="M720.0 645.0 L622.0 404.2 L625.3 402.8 Z" fill="#53575c"/>
<path d="M720.0 645.0 L624.1 403.3 L627.5 402.0 Z" fill="#55595e"/>
<path d="M720.0 645.0 L626.2 402.5 L629.6 401.2 Z" fill="#575b60"/>
<path d="M720.0 645.0 L628.3 401.7 L631.7 400.4 Z" fill="#595c62"/>
<path d="M720.0 645.0 L630.4 400.9 L633.9 399.7 Z" fill="#5a5e64"/>
<path d="M720.0 645.0 L632.6 400.1 L636.0 398.9 Z" fill="#5c6066"/>
<path d="M720.0 645.0 L634.7 399.4 L638.1 398.2 Z" fill="#5e6268"/>
<path d="M720.0 645.0 L636.9 398.7 L640.3 397.5 Z" fill="#5f6369"/>
<path d="M720.0 645.0 L639.0 397.9 L642.5 396.8 Z" fill="#60646b"/>
<path d="M720.0 645.0 L641.2 397.2 L644.6 396.2 Z" fill="#61656c"/>
<path d="M720.0 645.0 L643.3 396.6 L646.8 395.5 Z" fill="#62666d"/>
<path d="M720.0 645.0 L645.5 395.9 L649.0 394.9 Z" fill="#63686e"/>
<path d="M720.0 645.0 L647.7 395.3 L651.2 394.3 Z" fill="#64696f"/>
<path d="M720.0 645.0 L649.9 394.6 L653.4 393.7 Z" fill="#656a70"/>
<path d="M720.0 645.0 L652.0 394.0 L655.6 393.1 Z" fill="#666b71"/>
<path d="M720.0 645.0 L654.2 393.5 L657.8 392.6 Z" fill="#676c72"/>
<path d="M720.0 645.0 L656.4 392.9 L660.0 392.0 Z" fill="#686d73"/>
<path d="M720.0 645.0 L658.6 392.3 L662.2 391.5 Z" fill="#696e74"/>
<path d="M720.0 645.0 L660.8 391.8 L664.4 391.0 Z" fill="#6a6f75"/>
<path d="M720.0 645.0 L663.1 391.3 L666.6 390.5 Z" fill="#6b7076"/>
<path d="M720.0 645.0 L665.3 390.8 L668.8 390.1 Z" fill="#6c7178"/>
<path d="M720.0 645.0 L667.5 390.4 L671.1 389.6 Z" fill="#6d7178"/>
<path d="M720.0 645.0 L669.7 389.9 L673.3 389.2 Z" fill="#6d7278"/>
<path d="M720.0 645.0 L671.9 389.5 L675.5 388.8 Z" fill="#6d7279"/>
<path d="M720.0 645.0 L674.2 389.1 L677.8 388.5 Z" fill="#6e7279"/>
<path d="M720.0 645.0 L676.4 388.7 L680.0 388.1 Z" fill="#6e7379"/>
<path d="M720.0 645.0 L678.7 388.3 L682.2 387.8 Z" fill="#6e737a"/>
<path d="M720.0 645.0 L680.9 388.0 L684.5 387.4 Z" fill="#6f737a"/>
<path d="M720.0 645.0 L683.1 387.6 L686.7 387.1 Z" fill="#6f747a"/>
<path d="M720.0 645.0 L685.4 387.3 L689.0 386.9 Z" fill="#6f747b"/>
<path d="M720.0 645.0 L687.6 387.0 L691.2 386.6 Z" fill="#70747b"/>
<path d="M720.0 645.0 L689.9 386.7 L693.5 386.4 Z" fill="#70757c"/>
<path d="M720.0 645.0 L692.1 386.5 L695.8 386.1 Z" fill="#70757c"/>
<path d="M720.0 645.0 L694.4 386.3 L698.0 385.9 Z" fill="#71757c"/>
<path d="M720.0 645.0 L696.7 386.0 L700.3 385.7 Z" fill="#71767d"/>
<path d="M720.0 645.0 L698.9 385.9 L702.5 385.6 Z" fill="#71767d"/>
<path d="M720.0 645.0 L701.2 385.7 L704.8 385.4 Z" fill="#72767d"/>
<path d="M720.0 645.0 L703.4 385.5 L707.1 385.3 Z" fill="#72777e"/>
<path d="M720.0 645.0 L705.7 385.4 L709.3 385.2 Z" fill="#72777e"/>
<path d="M720.0 645.0 L708.0 385.3 L711.6 385.1 Z" fill="#73777e"/>
<path d="M720.0 645.0 L710.2 385.2 L713.9 385.1 Z" fill="#73787f"/>
<path d="M720.0 645.0 L712.5 385.1 L716.1 385.0 Z" fill="#73787f"/>
<path d="M720.0 645.0 L714.8 385.1 L718.4 385.0 Z" fill="#74787f"/>
<path d="M720.0 645.0 L717.1 385.0 L720.7 385.0 Z" fill="#747980"/>
<path d="M720.0 645.0 L719.3 385.0 L722.9 385.0 Z" fill="#747980"/>
<path d="M720.0 645.0 L721.6 385.0 L725.2 385.1 Z" fill="#74787f"/>
<path d="M720.0 645.0 L723.9 385.0 L727.5 385.1 Z" fill="#73787f"/>
<path d="M720.0 645.0 L726.1 385.1 L729.8 385.2 Z" fill="#73787f"/>
<path d="M720.0 645.0 L728.4 385.1 L732.0 385.3 Z" fill="#73777e"/>
<path d="M720.0 645.0 L730.7 385.2 L734.3 385.4 Z" fill="#72777e"/>
<path d="M720.0 645.0 L732.9 385.3 L736.6 385.5 Z" fill="#72777e"/>
<path d="M720.0 645.0 L735.2 385.4 L738.8 385.7 Z" fill="#72767d"/>
<path d="M720.0 645.0 L737.5 385.6 L741.1 385.9 Z" fill="#71767d"/>
<path d="M720.0 645.0 L739.7 385.7 L743.3 386.0 Z" fill="#71767d"/>
<path d="M720.0 645.0 L742.0 385.9 L745.6 386.3 Z" fill="#71757c"/>
<path d="M720.0 645.0 L744.2 386.1 L747.9 386.5 Z" fill="#70757c"/>
<path d="M720.0 645.0 L746.5 386.4 L750.1 386.7 Z" fill="#70757c"/>
<path d="M720.0 645.0 L748.8 386.6 L752.4 387.0 Z" fill="#70747b"/>
<path d="M720.0 645.0 L751.0 386.9 L754.6 387.3 Z" fill="#6f747b"/>
<path d="M720.0 645.0 L753.3 387.1 L756.9 387.6 Z" fill="#6f747a"/>
<path d="M720.0 645.0 L755.5 387.4 L759.1 388.0 Z" fill="#6f737a"/>
<path d="M720.0 645.0 L757.8 387.8 L761.3 388.3 Z" fill="#6e737a"/>
<path d="M720.0 645.0 L760.0 388.1 L763.6 388.7 Z" fill="#6e7379"/>
<path d="M720.0 645.0 L762.2 388.5 L765.8 389.1 Z" fill="#6e7279"/>
<path d="M720.0 645.0 L764.5 388.8 L768.1 389.5 Z" fill="#6d7279"/>
<path d="M720.0 645.0 L766.7 389.2 L770.3 389.9 Z" fill="#6d7278"/>
<path d="M720.0 645.0 L768.9 389.6 L772.5 390.4 Z" fill="#6d7178"/>
<path d="M720.0 645.0 L771.2 390.1 L774.7 390.8 Z" fill="#6c7178"/>
<path d="M720.0 645.0 L773.4 390.5 L776.9 391.3 Z" fill="#6b7076"/>
<path d="M720.0 645.0 L775.6 391.0 L779.2 391.8 Z" fill="#6a6f75"/>
<path d="M720.0 645.0 L777.8 391.5 L781.4 392.3 Z" fill="#696e74"/>
<path d="M720.0 645.0 L780.0 392.0 L783.6 392.9 Z" fill="#686d73"/>
<path d="M720.0 645.0 L782.2 392.6 L785.8 393.5 Z" fill="#676c72"/>
<path d="M720.0 645.0 L784.4 393.1 L788.0 394.0 Z" fill="#666b71"/>
<path d="M720.0 645.0 L786.6 393.7 L790.1 394.6 Z" fill="#656a70"/>
<path d="M720.0 645.0 L788.8 394.3 L792.3 395.3 Z" fill="#64696f"/>
<path d="M720.0 645.0 L791.0 394.9 L794.5 395.9 Z" fill="#63686e"/>
<path d="M720.0 645.0 L793.2 395.5 L796.7 396.6 Z" fill="#62666d"/>
<path d="M720.0 645.0 L795.4 396.2 L798.8 397.2 Z" fill="#61656c"/>
<path d="M720.0 645.0 L797.5 396.8 L801.0 397.9 Z" fill="#60646b"/>
<path d="M720.0 645.0 L799.7 397.5 L803.1 398.7 Z" fill="#5f6369"/>
<path d="M720.0 645.0 L801.9 398.2 L805.3 399.4 Z" fill="#5e6268"/>
<path d="M720.0 645.0 L804.0 398.9 L807.4 400.1 Z" fill="#5c6066"/>
<path d="M720.0 645.0 L806.1 399.7 L809.6 400.9 Z" fill="#5a5e64"/>
<path d="M720.0 645.0 L808.3 400.4 L811.7 401.7 Z" fill="#595c62"/>
<path d="M720.0 645.0 L810.4 401.2 L813.8 402.5 Z" fill="#575b60"/>
<path d="M720.0 645.0 L812.5 402.0 L815.9 403.3 Z" fill="#55595e"/>
<path d="M720.0 645.0 L814.7 402.8 L818.0 404.2 Z" fill="#53575c"/>
<path d="M720.0 645.0 L816.8 403.7 L820.1 405.1 Z" fill="#51555a"/>
<path d="M720.0 645.0 L818.9 404.5 L822.2 405.9 Z" fill="#4f5358"/>
<path d="M720.0 645.0 L821.0 405.4 L824.3 406.8 Z" fill="#4d5156"/>
<path d="M720.0 645.0 L823.1 406.3 L826.4 407.8 Z" fill="#4b4f54"/>
<path d="M720.0 645.0 L825.1 407.2 L828.4 408.7 Z" fill="#494c51"/>
<path d="M720.0 645.0 L827.2 408.1 L830.5 409.6 Z" fill="#46494e"/>
<path d="M720.0 645.0 L829.3 409.1 L832.5 410.6 Z" fill="#43464b"/>
<path d="M720.0 645.0 L831.3 410.0 L834.6 411.6 Z" fill="#404247"/>
<path d="M720.0 645.0 L833.4 411.0 L836.6 412.6 Z" fill="#3b3e43"/>
<path d="M720.0 645.0 L835.4 412.0 L838.6 413.6 Z" fill="#36393d"/>
<path d="M720.0 645.0 L837.4 413.0 L840.7 414.7 Z" fill="#303237"/>
<path d="M720.0 645.0 L839.5 414.1 L842.7 415.8 Z" fill="#2c2e32"/>
<path d="M720.0 645.0 L841.5 415.1 L844.7 416.8 Z" fill="#2c2e32"/>
<path d="M720.0 645.0 L843.5 416.2 L846.6 417.9 Z" fill="#2c2e32"/>
<path d="M720.0 645.0 L845.5 417.3 L848.6 419.0 Z" fill="#2c2e32"/>
<path d="M720.0 645.0 L847.4 418.4 L850.6 420.2 Z" fill="#2c2e32"/>
</g>
<path d="M608 421 L655.500 516 A64.500 29.500 0 0 0 784.500 516 L832 421" fill="none" stroke="#1c1d20" stroke-width="1.600" stroke-linejoin="round"/>
<ellipse cx="720" cy="504.500" rx="56" ry="31" fill="none" stroke="#8a8f96" stroke-width="0.800" opacity="0.550"/>
<path d="M813 427 L767 534" stroke="#1e1f22" stroke-width="1.600"/>
<path d="M818 427 L776 527" stroke="#3a3c40" stroke-width="0.800" opacity="0.600"/>
<!-- flange lower edge -->
<ellipse cx="720.200" cy="316.900" rx="209.300" ry="120.200" fill="url(#gRim)" stroke="#1c1d20" stroke-width="1.600"/>
<!-- flange top -->

<ellipse cx="720.200" cy="309.900" rx="209.800" ry="120.200" fill="#71767d" stroke="#1c1d20" stroke-width="1.800"/>
<path d="M649.5 196.7 L647.3 193.2 L647.3 200.2 L649.5 203.7 Z" fill="#8c929a" stroke="#1c1d20" stroke-width="1.200" stroke-linejoin="round"/>
<path d="M647.3 193.2 L652.4 192.2 L657.6 191.3 L662.8 190.4 L668.0 189.6 L673.3 188.9 L678.6 188.3 L680.4 193.7 L675.4 194.3 L670.3 195.0 L665.3 195.8 L660.4 196.6 L655.4 197.5 L650.5 198.4 Z" fill="#71767d" stroke="none"/>
<path d="M649.5 196.7 L647.3 193.2 L652.4 192.2 L657.6 191.3 L662.8 190.4 L668.0 189.6 L673.3 188.9 L678.6 188.3 L679.8 191.9" fill="none" stroke="#1c1d20" stroke-width="1.500" stroke-linejoin="round"/>
<path d="M878.3 230.9 L883.2 228.4 L883.2 235.4 L878.3 237.9 Z" fill="#8c929a" stroke="#1c1d20" stroke-width="1.200" stroke-linejoin="round"/>
<path d="M860.1 215.4 L864.2 217.4 L868.2 219.5 L872.1 221.7 L875.9 223.9 L879.6 226.1 L883.2 228.4 L875.9 232.1 L872.5 229.9 L868.9 227.7 L865.3 225.6 L861.6 223.5 L857.8 221.5 L853.9 219.6 Z" fill="#71767d" stroke="none"/>
<path d="M855.9 218.2 L860.1 215.4 L864.2 217.4 L868.2 219.5 L872.1 221.7 L875.9 223.9 L879.6 226.1 L883.2 228.4 L878.3 230.9" fill="none" stroke="#1c1d20" stroke-width="1.500" stroke-linejoin="round"/>
<path d="M918.7 348.8 L924.8 350.0 L924.8 357.0 L918.7 355.8 Z" fill="#8c929a" stroke="#1c1d20" stroke-width="1.200" stroke-linejoin="round"/>
<path d="M933.0 332.1 L932.0 335.1 L930.8 338.1 L929.5 341.1 L928.1 344.1 L926.5 347.1 L924.8 350.0 L924.8 357.0 L926.5 354.1 L928.1 351.1 L929.5 348.1 L930.8 345.1 L932.0 342.1 L933.0 339.1 Z" fill="#848a92" stroke="#1c1d20" stroke-width="1.200" stroke-linejoin="round"/>
<path d="M933.0 332.1 L932.0 335.1 L930.8 338.1 L929.5 341.1 L928.1 344.1 L926.5 347.1 L924.8 350.0 L915.7 348.3 L917.3 345.4 L918.8 342.6 L920.2 339.7 L921.4 336.9 L922.5 334.0 L923.5 331.1 Z" fill="#71767d" stroke="none"/>
<path d="M926.6 331.4 L933.0 332.1 L932.0 335.1 L930.8 338.1 L929.5 341.1 L928.1 344.1 L926.5 347.1 L924.8 350.0 L918.7 348.8" fill="none" stroke="#1c1d20" stroke-width="1.500" stroke-linejoin="round"/>
<path d="M760.6 427.9 L761.8 431.5 L761.8 438.5 L760.6 434.9 Z" fill="#8c929a" stroke="#1c1d20" stroke-width="1.200" stroke-linejoin="round"/>
<path d="M793.1 426.6 L788.0 427.6 L782.8 428.5 L777.6 429.4 L772.4 430.2 L767.1 430.9 L761.8 431.5 L761.8 438.5 L767.1 437.9 L772.4 437.2 L777.6 436.4 L782.8 435.5 L788.0 434.6 L793.1 433.6 Z" fill="#848a92" stroke="#1c1d20" stroke-width="1.200" stroke-linejoin="round"/>
<path d="M793.1 426.6 L788.0 427.6 L782.8 428.5 L777.6 429.4 L772.4 430.2 L767.1 430.9 L761.8 431.5 L760.0 426.1 L765.0 425.5 L770.1 424.8 L775.1 424.0 L780.0 423.2 L785.0 422.3 L789.9 421.4 Z" fill="#71767d" stroke="none"/>
<path d="M790.9 423.1 L793.1 426.6 L788.0 427.6 L782.8 428.5 L777.6 429.4 L772.4 430.2 L767.1 430.9 L761.8 431.5 L760.6 427.9" fill="none" stroke="#1c1d20" stroke-width="1.500" stroke-linejoin="round"/>
<path d="M584.5 401.6 L580.3 404.4 L580.3 411.4 L584.5 408.6 Z" fill="#8c929a" stroke="#1c1d20" stroke-width="1.200" stroke-linejoin="round"/>
<path d="M580.3 404.4 L576.2 402.4 L572.2 400.3 L568.3 398.1 L564.5 395.9 L560.8 393.7 L557.2 391.4 L557.2 398.4 L560.8 400.7 L564.5 402.9 L568.3 405.1 L572.2 407.3 L576.2 409.4 L580.3 411.4 Z" fill="#848a92" stroke="#1c1d20" stroke-width="1.200" stroke-linejoin="round"/>
<path d="M580.3 404.4 L576.2 402.4 L572.2 400.3 L568.3 398.1 L564.5 395.9 L560.8 393.7 L557.2 391.4 L564.5 387.7 L567.9 389.9 L571.5 392.1 L575.1 394.2 L578.8 396.3 L582.6 398.3 L586.5 400.2 Z" fill="#71767d" stroke="none"/>
<path d="M584.5 401.6 L580.3 404.4 L576.2 402.4 L572.2 400.3 L568.3 398.1 L564.5 395.9 L560.8 393.7 L557.2 391.4 L562.1 388.9" fill="none" stroke="#1c1d20" stroke-width="1.500" stroke-linejoin="round"/>
<path d="M513.8 288.4 L507.4 287.7 L507.4 294.7 L513.8 295.4 Z" fill="#8c929a" stroke="#1c1d20" stroke-width="1.200" stroke-linejoin="round"/>
<path d="M507.4 287.7 L508.4 284.7 L509.6 281.7 L510.9 278.7 L512.3 275.7 L513.9 272.7 L515.6 269.8 L524.7 271.5 L523.1 274.4 L521.6 277.2 L520.2 280.1 L519.0 282.9 L517.9 285.8 L516.9 288.7 Z" fill="#71767d" stroke="none"/>
<path d="M513.8 288.4 L507.4 287.7 L508.4 284.7 L509.6 281.7 L510.9 278.7 L512.3 275.7 L513.9 272.7 L515.6 269.8 L521.7 271.0" fill="none" stroke="#1c1d20" stroke-width="1.500" stroke-linejoin="round"/>
<g clip-path="url(#cpTop)" fill="none">
<ellipse cx="720.200" cy="316.900" rx="209.300" ry="120.200" stroke="#5d6167" stroke-width="1" opacity="0.550"/>
<path d="M564 330 L608 421 M876 330 L832 421" stroke="#5e6268" stroke-width="1" opacity="0.500"/>
<ellipse cx="720" cy="315" rx="162" ry="95" stroke="#868b92" stroke-width="1" opacity="0.500"/>
</g>
<!-- inner cone -->
<g clip-path="url(#cpIn)" shape-rendering="crispEdges">
<path d="M719.8 621.0 L508.8 257.8 L513.9 254.9 Z" fill="#2c2e32"/>
<path d="M719.8 621.0 L512.0 256.0 L517.1 253.1 Z" fill="#2c2e32"/>
<path d="M719.8 621.0 L515.2 254.2 L520.4 251.4 Z" fill="#2c2e32"/>
<path d="M719.8 621.0 L518.4 252.4 L523.6 249.6 Z" fill="#2c2e32"/>
<path d="M719.8 621.0 L521.7 250.7 L526.8 247.9 Z" fill="#2c2e32"/>
<path d="M719.8 621.0 L524.9 249.0 L530.1 246.3 Z" fill="#2c2e32"/>
<path d="M719.8 621.0 L528.1 247.3 L533.4 244.6 Z" fill="#2c2e32"/>
<path d="M719.8 621.0 L531.4 245.6 L536.7 243.0 Z" fill="#3e4146"/>
<path d="M719.8 621.0 L534.7 244.0 L540.0 241.4 Z" fill="#4a4e53"/>
<path d="M719.8 621.0 L538.0 242.4 L543.3 239.9 Z" fill="#55595f"/>
<path d="M719.8 621.0 L541.3 240.8 L546.6 238.4 Z" fill="#5c6066"/>
<path d="M719.8 621.0 L544.6 239.3 L550.0 236.9 Z" fill="#62666d"/>
<path d="M719.8 621.0 L548.0 237.8 L553.3 235.4 Z" fill="#686d74"/>
<path d="M719.8 621.0 L551.3 236.3 L556.7 234.0 Z" fill="#6e737a"/>
<path d="M719.8 621.0 L554.7 234.8 L560.1 232.6 Z" fill="#72777e"/>
<path d="M719.8 621.0 L558.1 233.4 L563.5 231.2 Z" fill="#757b82"/>
<path d="M719.8 621.0 L561.4 232.0 L566.9 229.8 Z" fill="#797e86"/>
<path d="M719.8 621.0 L564.8 230.6 L570.3 228.5 Z" fill="#7d828a"/>
<path d="M719.8 621.0 L568.3 229.3 L573.7 227.2 Z" fill="#80868e"/>
<path d="M719.8 621.0 L571.7 228.0 L577.2 226.0 Z" fill="#838992"/>
<path d="M719.8 621.0 L575.1 226.7 L580.6 224.7 Z" fill="#878d95"/>
<path d="M719.8 621.0 L578.6 225.5 L584.1 223.5 Z" fill="#8a9099"/>
<path d="M719.8 621.0 L582.0 224.2 L587.6 222.4 Z" fill="#8d939c"/>
<path d="M719.8 621.0 L585.5 223.1 L591.1 221.2 Z" fill="#9097a0"/>
<path d="M719.8 621.0 L589.0 221.9 L594.6 220.1 Z" fill="#9399a3"/>
<path d="M719.8 621.0 L592.5 220.8 L598.1 219.0 Z" fill="#959ba5"/>
<path d="M719.8 621.0 L596.0 219.7 L601.6 218.0 Z" fill="#979da7"/>
<path d="M719.8 621.0 L599.5 218.6 L605.1 217.0 Z" fill="#999fa9"/>
<path d="M719.8 621.0 L603.0 217.6 L608.6 216.0 Z" fill="#9aa1ab"/>
<path d="M719.8 621.0 L606.5 216.6 L612.2 215.0 Z" fill="#9ca3ad"/>
<path d="M719.8 621.0 L610.0 215.6 L615.7 214.1 Z" fill="#9ea5af"/>
<path d="M719.8 621.0 L613.6 214.7 L619.3 213.2 Z" fill="#a0a7b1"/>
<path d="M719.8 621.0 L617.1 213.7 L622.8 212.3 Z" fill="#a2a9b2"/>
<path d="M719.8 621.0 L620.7 212.9 L626.4 211.5 Z" fill="#a3aab4"/>
<path d="M719.8 621.0 L624.2 212.0 L630.0 210.7 Z" fill="#a5acb6"/>
<path d="M719.8 621.0 L627.8 211.2 L633.6 210.0 Z" fill="#a7aeb8"/>
<path d="M719.8 621.0 L631.4 210.4 L637.1 209.2 Z" fill="#a8b0ba"/>
<path d="M719.8 621.0 L635.0 209.7 L640.7 208.5 Z" fill="#aab1bc"/>
<path d="M719.8 621.0 L638.6 208.9 L644.3 207.8 Z" fill="#aab2bc"/>
<path d="M719.8 621.0 L642.2 208.2 L648.0 207.2 Z" fill="#abb3bd"/>
<path d="M719.8 621.0 L645.8 207.6 L651.6 206.6 Z" fill="#acb3be"/>
<path d="M719.8 621.0 L649.4 206.9 L655.2 206.0 Z" fill="#acb4be"/>
<path d="M719.8 621.0 L653.0 206.3 L658.8 205.5 Z" fill="#adb4bf"/>
<path d="M719.8 621.0 L656.6 205.8 L662.4 204.9 Z" fill="#adb5c0"/>
<path d="M719.8 621.0 L660.3 205.2 L666.1 204.5 Z" fill="#aeb6c0"/>
<path d="M719.8 621.0 L663.9 204.7 L669.7 204.0 Z" fill="#afb6c1"/>
<path d="M719.8 621.0 L667.5 204.3 L673.3 203.6 Z" fill="#afb7c1"/>
<path d="M719.8 621.0 L671.2 203.8 L677.0 203.2 Z" fill="#b0b7c2"/>
<path d="M719.8 621.0 L674.8 203.4 L680.6 202.8 Z" fill="#b0b8c3"/>
<path d="M719.8 621.0 L678.5 203.0 L684.3 202.5 Z" fill="#b1b9c3"/>
<path d="M719.8 621.0 L682.1 202.7 L687.9 202.2 Z" fill="#b2b9c4"/>
<path d="M719.8 621.0 L685.8 202.4 L691.6 201.9 Z" fill="#b2bac5"/>
<path d="M719.8 621.0 L689.4 202.1 L695.3 201.7 Z" fill="#b3bac5"/>
<path d="M719.8 621.0 L693.1 201.9 L698.9 201.5 Z" fill="#b3bbc6"/>
<path d="M719.8 621.0 L696.7 201.6 L702.6 201.4 Z" fill="#b4bcc7"/>
<path d="M719.8 621.0 L700.4 201.4 L706.2 201.2 Z" fill="#b4bcc7"/>
<path d="M719.8 621.0 L704.0 201.3 L709.9 201.1 Z" fill="#b5bdc8"/>
<path d="M719.8 621.0 L707.7 201.2 L713.6 201.0 Z" fill="#b6bec8"/>
<path d="M719.8 621.0 L711.4 201.1 L717.2 201.0 Z" fill="#b6bec9"/>
<path d="M719.8 621.0 L715.0 201.0 L720.9 201.0 Z" fill="#b7bfca"/>
<path d="M719.8 621.0 L718.7 201.0 L724.6 201.0 Z" fill="#b7bfca"/>
<path d="M719.8 621.0 L722.4 201.0 L728.2 201.1 Z" fill="#b6bec9"/>
<path d="M719.8 621.0 L726.0 201.0 L731.9 201.2 Z" fill="#b6bec8"/>
<path d="M719.8 621.0 L729.7 201.1 L735.6 201.3 Z" fill="#b5bdc8"/>
<path d="M719.8 621.0 L733.4 201.2 L739.2 201.4 Z" fill="#b4bcc7"/>
<path d="M719.8 621.0 L737.0 201.4 L742.9 201.6 Z" fill="#b4bcc7"/>
<path d="M719.8 621.0 L740.7 201.5 L746.5 201.9 Z" fill="#b3bbc6"/>
<path d="M719.8 621.0 L744.3 201.7 L750.2 202.1 Z" fill="#b3bac5"/>
<path d="M719.8 621.0 L748.0 201.9 L753.8 202.4 Z" fill="#b2bac5"/>
<path d="M719.8 621.0 L751.7 202.2 L757.5 202.7 Z" fill="#b2b9c4"/>
<path d="M719.8 621.0 L755.3 202.5 L761.1 203.0 Z" fill="#b1b9c3"/>
<path d="M719.8 621.0 L759.0 202.8 L764.8 203.4 Z" fill="#b0b8c3"/>
<path d="M719.8 621.0 L762.6 203.2 L768.4 203.8 Z" fill="#b0b7c2"/>
<path d="M719.8 621.0 L766.3 203.6 L772.1 204.3 Z" fill="#afb7c1"/>
<path d="M719.8 621.0 L769.9 204.0 L775.7 204.7 Z" fill="#afb6c1"/>
<path d="M719.8 621.0 L773.5 204.5 L779.3 205.2 Z" fill="#aeb6c0"/>
<path d="M719.8 621.0 L777.2 204.9 L783.0 205.8 Z" fill="#adb5c0"/>
<path d="M719.8 621.0 L780.8 205.5 L786.6 206.3 Z" fill="#adb4bf"/>
<path d="M719.8 621.0 L784.4 206.0 L790.2 206.9 Z" fill="#acb4be"/>
<path d="M719.8 621.0 L788.0 206.6 L793.8 207.6 Z" fill="#acb3be"/>
<path d="M719.8 621.0 L791.6 207.2 L797.4 208.2 Z" fill="#abb3bd"/>
<path d="M719.8 621.0 L795.3 207.8 L801.0 208.9 Z" fill="#aab2bc"/>
<path d="M719.8 621.0 L798.9 208.5 L804.6 209.7 Z" fill="#aab1bc"/>
<path d="M719.8 621.0 L802.5 209.2 L808.2 210.4 Z" fill="#a8b0ba"/>
<path d="M719.8 621.0 L806.0 210.0 L811.8 211.2 Z" fill="#a7aeb8"/>
<path d="M719.8 621.0 L809.6 210.7 L815.4 212.0 Z" fill="#a5acb6"/>
<path d="M719.8 621.0 L813.2 211.5 L818.9 212.9 Z" fill="#a3aab4"/>
<path d="M719.8 621.0 L816.8 212.3 L822.5 213.7 Z" fill="#a2a9b2"/>
<path d="M719.8 621.0 L820.3 213.2 L826.0 214.7 Z" fill="#a0a7b1"/>
<path d="M719.8 621.0 L823.9 214.1 L829.6 215.6 Z" fill="#9ea5af"/>
<path d="M719.8 621.0 L827.4 215.0 L833.1 216.6 Z" fill="#9ca3ad"/>
<path d="M719.8 621.0 L831.0 216.0 L836.6 217.6 Z" fill="#9aa1ab"/>
<path d="M719.8 621.0 L834.5 217.0 L840.1 218.6 Z" fill="#999fa9"/>
<path d="M719.8 621.0 L838.0 218.0 L843.6 219.7 Z" fill="#979da7"/>
<path d="M719.8 621.0 L841.5 219.0 L847.1 220.8 Z" fill="#959ba5"/>
<path d="M719.8 621.0 L845.0 220.1 L850.6 221.9 Z" fill="#9399a3"/>
<path d="M719.8 621.0 L848.5 221.2 L854.1 223.1 Z" fill="#9097a0"/>
<path d="M719.8 621.0 L852.0 222.4 L857.6 224.2 Z" fill="#8d939c"/>
<path d="M719.8 621.0 L855.5 223.5 L861.0 225.5 Z" fill="#8a9099"/>
<path d="M719.8 621.0 L859.0 224.7 L864.5 226.7 Z" fill="#878d95"/>
<path d="M719.8 621.0 L862.4 226.0 L867.9 228.0 Z" fill="#838992"/>
<path d="M719.8 621.0 L865.9 227.2 L871.3 229.3 Z" fill="#80868e"/>
<path d="M719.8 621.0 L869.3 228.5 L874.8 230.6 Z" fill="#7d828a"/>
<path d="M719.8 621.0 L872.7 229.8 L878.2 232.0 Z" fill="#797e86"/>
<path d="M719.8 621.0 L876.1 231.2 L881.5 233.4 Z" fill="#757b82"/>
<path d="M719.8 621.0 L879.5 232.6 L884.9 234.8 Z" fill="#72777e"/>
<path d="M719.8 621.0 L882.9 234.0 L888.3 236.3 Z" fill="#6e737a"/>
<path d="M719.8 621.0 L886.3 235.4 L891.6 237.8 Z" fill="#686d74"/>
<path d="M719.8 621.0 L889.6 236.9 L895.0 239.3 Z" fill="#62666d"/>
<path d="M719.8 621.0 L893.0 238.4 L898.3 240.8 Z" fill="#5c6066"/>
<path d="M719.8 621.0 L896.3 239.9 L901.6 242.4 Z" fill="#55595f"/>
<path d="M719.8 621.0 L899.6 241.4 L904.9 244.0 Z" fill="#4a4e53"/>
<path d="M719.8 621.0 L902.9 243.0 L908.2 245.6 Z" fill="#3e4146"/>
<path d="M719.8 621.0 L906.2 244.6 L911.5 247.3 Z" fill="#2c2e32"/>
<path d="M719.8 621.0 L909.5 246.3 L914.7 249.0 Z" fill="#2c2e32"/>
<path d="M719.8 621.0 L912.8 247.9 L917.9 250.7 Z" fill="#2c2e32"/>
<path d="M719.8 621.0 L916.0 249.6 L921.2 252.4 Z" fill="#2c2e32"/>
<path d="M719.8 621.0 L919.2 251.4 L924.4 254.2 Z" fill="#2c2e32"/>
<path d="M719.8 621.0 L922.5 253.1 L927.6 256.0 Z" fill="#2c2e32"/>
<path d="M719.8 621.0 L925.7 254.9 L930.8 257.8 Z" fill="#2c2e32"/>
</g>
<g clip-path="url(#cpIn)" fill="none"><ellipse cx="719.800" cy="316.500" rx="155.800" ry="90.500" stroke="#8d939b" stroke-width="1" opacity="0.450"/></g>
<ellipse cx="719.800" cy="311.500" rx="155.800" ry="90.500" fill="none" stroke="#15161a" stroke-width="1.800"/>
<!-- axes -->
<path d="M720 132 V402" stroke="#0000ff" stroke-width="2"/>
<path d="M720 402 V545" stroke="#0000ff" stroke-width="2" stroke-dasharray="4.500 11.400" stroke-dashoffset="-12.700"/>
<path d="M720 545 V655" stroke="#0000ff" stroke-width="2"/>
<path d="M448.500 153.200 L991.500 466.700" stroke="#ff0000" stroke-width="2"/>
<path d="M448.500 466.700 L991.500 153.200" stroke="#00ff00" stroke-width="2"/>
<path d="M720 310 L780 344.600" stroke="#ff0000" stroke-width="2"/>
<text transform="translate(463.500 152.500) rotate(30) skewX(-12)" font-family="Liberation Serif, serif" font-style="italic" font-size="20" fill="#ff0000" textLength="62" lengthAdjust="spacingAndGlyphs">Axe X</text>
<text transform="translate(455 453.500) rotate(-30) skewX(-12)" font-family="Liberation Serif, serif" font-style="italic" font-size="20" fill="#00ff00" textLength="62" lengthAdjust="spacingAndGlyphs">Axe Y</text>
<text transform="translate(710 651.500) rotate(-90)" font-family="Liberation Serif, serif" font-style="italic" font-size="24" fill="#0000ff" textLength="69" lengthAdjust="spacingAndGlyphs">Axe Z</text>
<g id="navcube" stroke-linejoin="round">
<g stroke-width="2" opacity="0.650"><path d="M1158.200 231.500 V190.500" stroke="#0000ff"/><path d="M1158.200 231.500 L1194.500 211.300" stroke="#00e000"/><path d="M1158.200 231.500 L1194 252.800" stroke="#ff0000"/></g>
<g fill="#e2effb" fill-opacity="0.780" stroke="#5c6068" stroke-width="0.900">
<path d="M1207 138.500 L1218.500 151 H1195.500 Z"/>
<path d="M1207 269 L1218.500 256.500 H1195.500 Z"/>
<path d="M1141.500 203.300 L1154.400 192 V214.600 Z"/>
<path d="M1272.500 203.300 L1259.600 192 V214.600 Z"/>
<circle cx="1264.400" cy="146.700" r="6.600"/>
<path d="M1187.500 144.500 L1190.500 151.500 Q1174 157.500 1165.500 166.500 L1169.500 170.500 L1157.700 172.700 L1159.500 159.500 L1162.500 163 Q1172 151.500 1187.500 144.500 Z"/>
<path d="M1226.500 144.500 L1223.500 151.500 Q1240 157.500 1248.500 166.500 L1244.500 170.500 L1256.300 172.700 L1254.500 159.500 L1251.500 163 Q1242 151.500 1226.500 144.500 Z"/>
<path d="M1201 161.800 H1212 L1235.600 175.400 L1246 188.500 V221.500 L1239.400 231.500 L1215.400 244.200 L1211.700 246.200 H1202 L1197.700 242.500 L1174.800 230 L1167.900 220 V189.400 L1171.700 181 L1178.300 175.400 Z"/>
<path d="M1252 241 L1261.700 245.200 V256 L1252 260.200 L1242.200 256 V245.200 Z"/>
</g>
<g fill="none" stroke="#5c6068" stroke-width="0.900">
<path d="M1178.300 175.400 L1179 180.600 L1200.800 195 H1213.300 L1235.200 180.600 L1235.600 175.400"/>
<path d="M1167.900 189.400 L1173.100 191.500 L1197.100 203.300 L1200.800 195 M1173.100 191.500 L1179 180.600"/>
<path d="M1246 188.500 L1241 191.500 L1217.100 203.300 L1213.300 195 M1241 191.500 L1235.200 180.600"/>
<path d="M1197.100 203.300 L1201.900 212.700 H1212.700 L1217.100 203.300"/>
<path d="M1201.900 212.700 L1201.500 239.800 H1212.700 V212.700 M1201.500 239.800 L1197.700 242.500 M1212.700 239.800 L1215.400 244.200"/>
<path d="M1242.200 245.200 L1252 248.800 L1261.700 245.200 M1252 248.800 V260.200"/>
</g>
<path d="M1166 227.200 L1194.500 211.300" stroke="#30e030" stroke-width="2" opacity="0.330"/>
<g font-family="Liberation Sans, sans-serif" fill="#8b8f97">
<text transform="translate(1192.500 172.500) rotate(30) skewX(-25)" font-size="9.500" textLength="29" lengthAdjust="spacingAndGlyphs">HAUT</text>
<text transform="translate(1169 210.500) rotate(28) skewX(0)" font-size="9.500" textLength="32" lengthAdjust="spacingAndGlyphs">AVANT</text>
<text transform="translate(1214.500 227.500) rotate(-26)" font-size="9.500" textLength="33" lengthAdjust="spacingAndGlyphs">DROITE</text>
</g>
</g>
<g id="axiscross">
<path d="M1253 629 V615" stroke="#8a8ac8" stroke-width="1.600"/><path d="M1253 611.500 L1255 617.500 H1251 Z" fill="#1c1c86"/>
<path d="M1253 629 L1260 625" stroke="#2f8f2f" stroke-width="1.400"/><path d="M1263.500 623 L1259 623.700 L1260.500 626.400 Z" fill="#1f7a1f"/>
<path d="M1253 629 L1263 634.600" stroke="#8a2a2a" stroke-width="1.400"/><path d="M1267.700 637.200 L1261.500 636.200 L1263.300 632.800 Z" fill="#8a1c1c"/>
<g font-family="Liberation Sans, sans-serif" font-size="9.500" fill="#000" stroke="#000" stroke-width="0.250"><text x="1253.700" y="610">Z</text><text x="1264.700" y="621.800">Y</text><text x="1268.600" y="637.600">X</text></g>
</g>

<g id="annot">
<clipPath id="cp1"><rect x="460" y="528" width="24" height="24.300"/><rect x="470.500" y="552" width="4.300" height="4.200"/></clipPath>
<circle cx="471" cy="544.800" r="20" fill="#e7070c"/>
<text x="472.400" y="556" text-anchor="middle" font-family="Liberation Sans, sans-serif" font-size="30" fill="#fff" stroke="#fff" stroke-width="0.500" clip-path="url(#cp1)">1</text>
</g>

</svg>
<div class="abs" style="left:1278px;top:132px;width:1px;height:523px;background:#a8a8a8"></div>
<!--/VIEW3D-->
<!--BOTTOM-->
<!-- bottom tabs -->
<div class="abs" style="left:373px;top:655px;width:90px;height:30px;box-sizing:border-box;border:1px solid #b4b4b4;border-top-color:#c4c4c4;border-radius:0 0 3px 3px;background:linear-gradient(#e9e9e9,#dcdcdc)"></div>
<div class="abs" style="left:581px;top:655px;width:92px;height:30px;box-sizing:border-box;border:1px solid #b4b4b4;border-top-color:#c4c4c4;border-radius:0 0 3px 3px;background:linear-gradient(#e9e9e9,#dcdcdc)"></div>
<div class="abs" style="left:463px;top:655px;width:118px;height:33px;box-sizing:border-box;border:1px solid #b4b4b4;border-top:none;border-radius:0 0 3px 3px;background:linear-gradient(#ffffff,#fbfbfb 60%,#f2f2f2)"></div>
<div class="abs t11 b" style="left:404.500px;top:664px;color:#555">Start</div>
<div class="abs t11 b" style="left:494.500px;top:666px;letter-spacing:0.2px">TP8-1 : 1*</div>
<div class="abs t11 b" style="left:612.500px;top:664px;color:#555;letter-spacing:0.3px">Dim*</div>
<svg class="abs" style="left:373px;top:655px" width="300" height="33" viewBox="373 655 300 33">
<g stroke="#7d7d7d" stroke-width="3" stroke-linecap="butt"><path d="M442 666.500 L454 678 M454 666.500 L442 678"/><path d="M560 667.500 L572 679 M572 667.500 L560 679"/><path d="M652 666.500 L664 678 M664 666.500 L652 678"/></g>
<g transform="translate(369 654)"><path d="M10 9.500 L12.800 7.200 V21 L10 23.200 Z" fill="#c4202b"/><path d="M12.800 7.200 H24.200 L21.500 9.800 H12.800 Z" fill="#d8262f"/><path d="M20 7.200 H24.200 L21.500 9.800 H19 Z" fill="#f04a4a"/><path d="M10 23.200 L12.800 21 H16 L14 23.200 Z" fill="#ff5252"/><path d="M12.800 9.800 H21.500 V12.800 H16.800 V14.300 H19.500 V17.300 H16.800 V21.200 H12.800 Z" fill="#ffffff"/><path d="M16 13 L19 12.600 L21.500 11.500 L24.200 10.300 L23.400 13 L22 14.200 L23.800 15.200 V17.600 H21.800 L21.200 19 L22 20.400 L20.400 21.600 L19.200 20.600 L18.400 22 L16.800 21.800 L15.800 23.200 H13.800 L15.200 21.400 L16 19.500 Z" fill="#3b86e2"/></g>
<path d="M471.500 664 H478 L481 667 V678.500 H471.500 Z" fill="#f6f6f6" stroke="#8a8a8a" stroke-width="0.800"/>
<path d="M473.500 671.500 L476.500 669.500 L479.500 671 V675 L476.500 677 L473.500 675.500 Z" fill="#2b4f94" stroke="#1b2f5c" stroke-width="0.500"/>
<circle cx="478" cy="670.500" r="2.200" fill="#d02020"/>
<rect x="586.500" y="663.500" width="15" height="11" fill="#f4f4f4" stroke="#8a8a8a" stroke-width="0.900"/>
<path d="M586.500 666.500 H601.500 M586.500 669 H601.500 M586.500 671.500 H601.500 M591 663.500 V674.500" stroke="#8a8a8a" stroke-width="0.800"/>
</svg>
<!-- status bar -->
<div class="abs t11 b" style="left:3.900px;top:697.300px;letter-spacing:-0.017px">Preselected: Unnamed.Body.Origin.Y_Axis. (0.00 mm, -72.35 mm, 0.00 mm)</div>
<div class="abs btn" style="left:929px;top:691px;width:90px;height:25.500px"></div>
<div class="abs btn" style="left:1025px;top:691px;width:89.500px;height:25.500px"></div>
<div class="abs btn" style="left:1121px;top:692px;width:139px;height:23.500px"></div>
<div class="abs t11 b" style="left:1055px;top:697.500px;letter-spacing:-0.3px">Gesture</div>
<div class="abs t11 b" style="left:1126.500px;top:697.500px">170,51 mm x 98,43 mm</div>
<svg class="abs" style="left:929px;top:691px" width="351" height="29" viewBox="929 691 351 29">
<rect x="931.500" y="698" width="13.500" height="12" fill="#3a6fb5"/><path d="M931.500 698 L945 710 V698 Z" fill="#2f62a6"/>
<path d="M1008 703 H1016 L1013 706 H1011 Z M1104 703 H1112 L1109 706 H1107 Z M1249 703 H1257 L1254 706 H1252 Z" fill="#5c5c5c"/>
<circle cx="1049.500" cy="699.500" r="2.400" fill="#2b2b2b"/><circle cx="1039.500" cy="708.500" r="2.400" fill="#2b2b2b"/>
<path d="M1047.500 699.500 Q1040 698.500 1040.500 704" fill="none" stroke="#4a4a4a" stroke-width="2"/><path d="M1041.500 708.500 Q1049 709.500 1048.500 704" fill="none" stroke="#4a4a4a" stroke-width="2"/>
<g fill="#b8b8b8"><rect x="1276" y="708" width="2" height="2"/><rect x="1273" y="711" width="2" height="2"/><rect x="1276" y="711" width="2" height="2"/><rect x="1270" y="714" width="2" height="2"/><rect x="1273" y="714" width="2" height="2"/><rect x="1276" y="714" width="2" height="2"/></g>
</svg>
<!-- annotation overlay -->
<svg class="abs" style="left:0;top:0" width="1280" height="720" viewBox="0 0 1280 720">
<rect x="162.500" y="637" width="176" height="41.500" fill="none" stroke="#e30613" stroke-width="3"/>
<path d="M430.600 575.900 L432.800 579.100 L343.600 641.300 L345.900 645 L329.700 647.800 L338.700 634.600 L341.100 638 Z" fill="#e30613"/>
</svg>
<!-- window frame -->
<div class="abs" style="left:0;top:0;width:1280px;height:720px;box-sizing:border-box;border:1px solid #a8a8a8;border-bottom:2px solid #b0b0b0;border-radius:8px;box-shadow:0 0 0 12px #c4c4c4;pointer-events:none"></div>
<!--/BOTTOM-->
</body></html>
